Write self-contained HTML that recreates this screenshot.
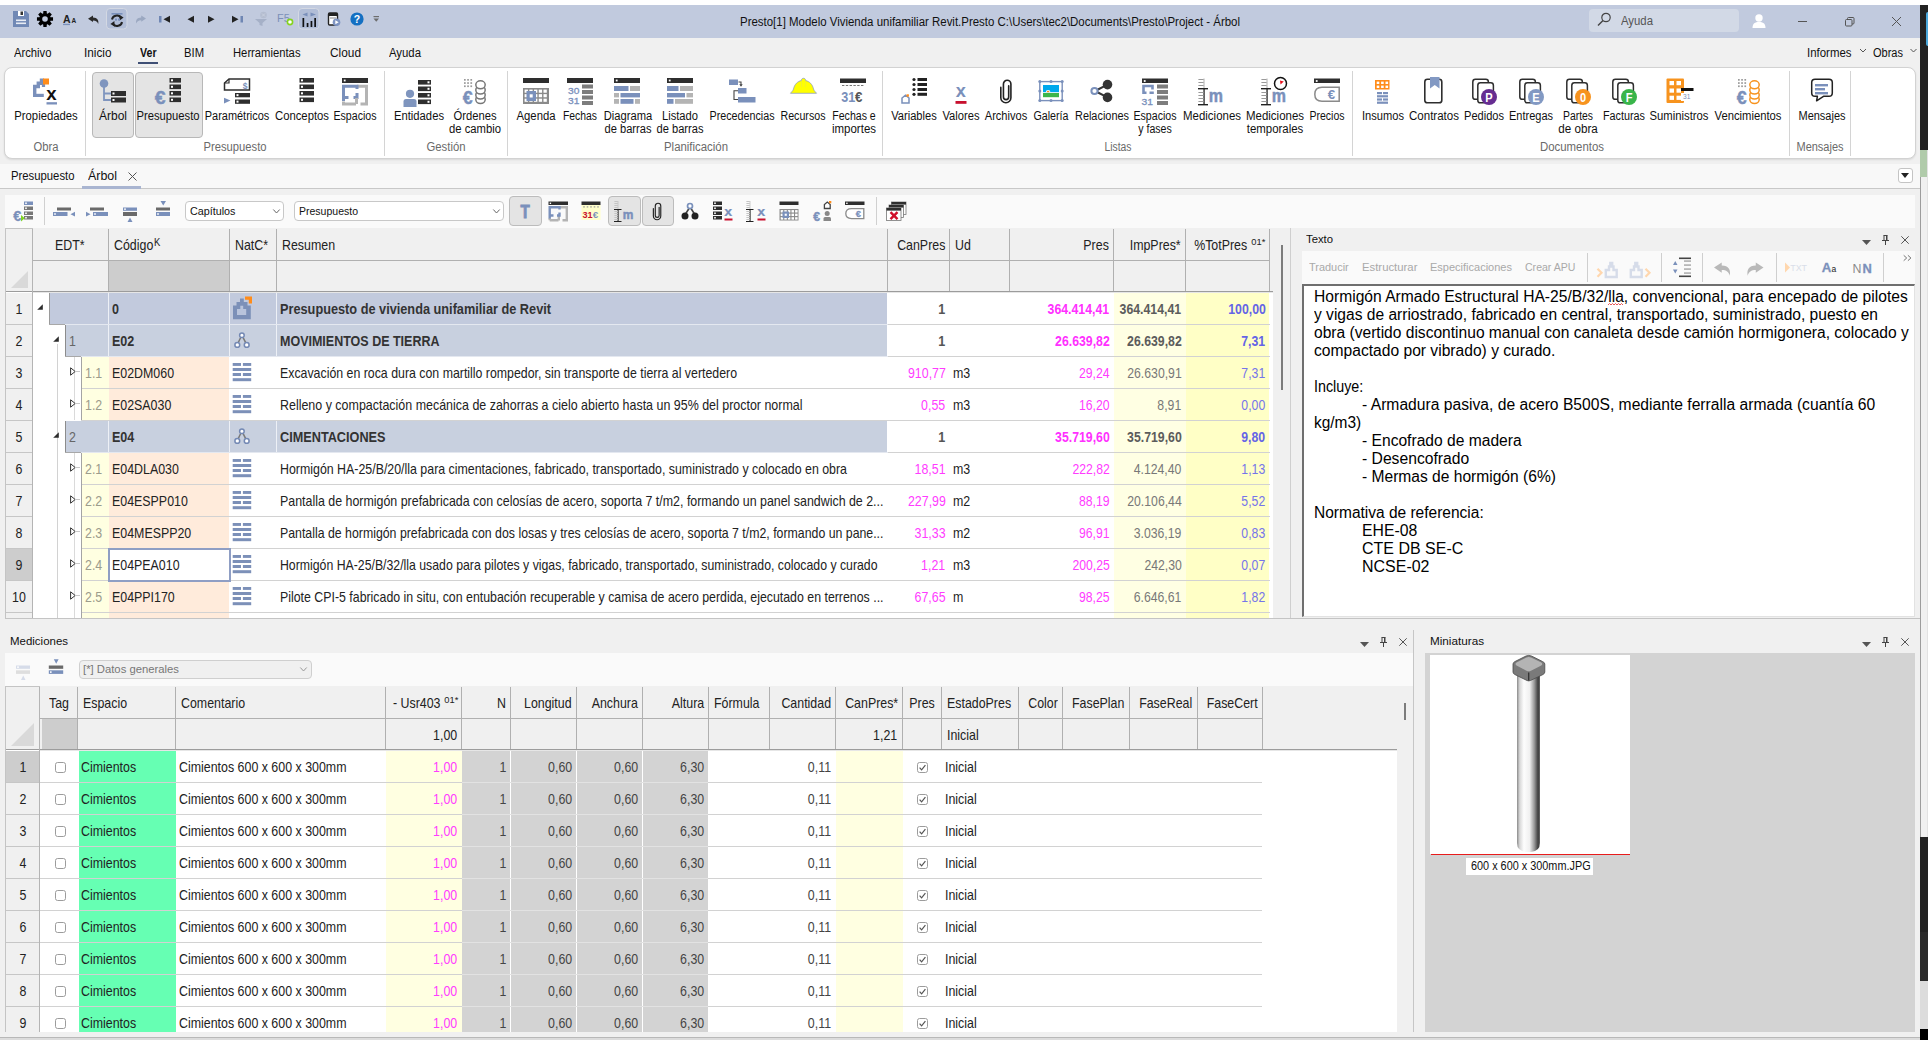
<!DOCTYPE html>
<html><head><meta charset="utf-8"><title>Presto</title><style>
html,body{margin:0;padding:0;}
body{width:1928px;height:1040px;overflow:hidden;background:#f0f0f0;position:relative;font-family:"Liberation Sans",sans-serif;}
body div,body svg,body span.t{position:absolute;}
span.t{white-space:nowrap;display:block;}
svg{overflow:visible;}
</style></head><body>
<div style="left:0px;top:0px;width:1928px;height:5px;background:#fff;"></div>
<div style="left:0px;top:5px;width:1920px;height:33px;background:#c1cade;"></div>
<span class="t" style="top:14px;font-size:12px;line-height:16px;color:#111;left:740px;transform-origin:0 50%;transform:scaleX(0.9542);">Presto[1] Modelo Vivienda unifamiliar Revit.Presto C:\Users\tec2\Documents\Presto\Project - Árbol</span>
<div style="left:1589px;top:9px;width:150px;height:23px;background:#d2d9e6;border-radius:4px;"></div>
<span class="t" style="top:13px;font-size:12px;line-height:16px;color:#555;left:1621px;transform-origin:0 50%;transform:scaleX(0.9465);">Ayuda</span>
<div style="left:0px;top:38px;width:1920px;height:30px;background:#f0f0f0;"></div>
<span class="t" style="top:45px;font-size:12px;line-height:16px;color:#111;left:14px;transform-origin:0 50%;transform:scaleX(0.9371);">Archivo</span>
<span class="t" style="top:45px;font-size:12px;line-height:16px;color:#111;left:84px;transform-origin:0 50%;transform:scaleX(0.9816);">Inicio</span>
<span class="t" style="top:45px;font-size:12px;line-height:16px;color:#111;font-weight:bold;left:140px;transform-origin:0 50%;transform:scaleX(0.8830);">Ver</span>
<span class="t" style="top:45px;font-size:12px;line-height:16px;color:#111;left:184px;transform-origin:0 50%;transform:scaleX(0.9374);">BIM</span>
<span class="t" style="top:45px;font-size:12px;line-height:16px;color:#111;left:233px;transform-origin:0 50%;transform:scaleX(0.9372);">Herramientas</span>
<span class="t" style="top:45px;font-size:12px;line-height:16px;color:#111;left:330px;transform-origin:0 50%;transform:scaleX(0.9887);">Cloud</span>
<span class="t" style="top:45px;font-size:12px;line-height:16px;color:#111;left:389px;transform-origin:0 50%;transform:scaleX(0.9465);">Ayuda</span>
<span class="t" style="top:45px;font-size:12px;line-height:16px;color:#111;left:1807px;transform-origin:0 50%;transform:scaleX(0.9532);">Informes</span>
<span class="t" style="top:45px;font-size:12px;line-height:16px;color:#111;left:1872.5px;transform-origin:0 50%;transform:scaleX(0.9180);">Obras</span>
<div style="left:138px;top:62px;width:20px;height:2px;background:#3f4f75;"></div>
<div style="left:4px;top:67px;width:1911.5px;height:92px;background:#fff;border:1px solid #d2d2d2;border-radius:8px;box-sizing:border-box;box-shadow:0 1px 2px rgba(0,0,0,0.10);"></div>
<div style="left:85px;top:70.5px;width:1px;height:85px;background:#d4d4d4;"></div>
<div style="left:384px;top:70.5px;width:1px;height:85px;background:#d4d4d4;"></div>
<div style="left:506.5px;top:70.5px;width:1px;height:85px;background:#d4d4d4;"></div>
<div style="left:882px;top:70.5px;width:1px;height:85px;background:#d4d4d4;"></div>
<div style="left:1352px;top:70.5px;width:1px;height:85px;background:#d4d4d4;"></div>
<div style="left:1789px;top:70.5px;width:1px;height:85px;background:#d4d4d4;"></div>
<div style="left:1850px;top:70.5px;width:1px;height:85px;background:#d4d4d4;"></div>
<div style="left:92px;top:72px;width:41.5px;height:65.5px;background:#e4e4e4;border:1px solid #b8b8b8;border-radius:4px;box-sizing:border-box;"></div>
<div style="left:134.5px;top:72px;width:68.5px;height:65.5px;background:#e4e4e4;border:1px solid #b8b8b8;border-radius:4px;box-sizing:border-box;"></div>
<span class="t" style="top:108px;font-size:12px;line-height:16px;color:#111;left:45.75px;transform:translateX(-50%) scaleX(0.9423);">Propiedades</span>
<span class="t" style="top:108px;font-size:12px;line-height:16px;color:#111;left:113px;transform:translateX(-50%) scaleX(0.9995);">Árbol</span>
<span class="t" style="top:108px;font-size:12px;line-height:16px;color:#111;left:167.75px;transform:translateX(-50%) scaleX(0.9350);">Presupuesto</span>
<span class="t" style="top:108px;font-size:12px;line-height:16px;color:#111;left:237.25px;transform:translateX(-50%) scaleX(0.9124);">Paramétricos</span>
<span class="t" style="top:108px;font-size:12px;line-height:16px;color:#111;left:301.5px;transform:translateX(-50%) scaleX(0.9413);">Conceptos</span>
<span class="t" style="top:108px;font-size:12px;line-height:16px;color:#111;left:355px;transform:translateX(-50%) scaleX(0.8831);">Espacios</span>
<span class="t" style="top:108px;font-size:12px;line-height:16px;color:#111;left:418.5px;transform:translateX(-50%) scaleX(0.9368);">Entidades</span>
<span class="t" style="top:108px;font-size:12px;line-height:16px;color:#111;left:474.5px;transform:translateX(-50%) scaleX(0.9342);">Órdenes</span>
<span class="t" style="top:121px;font-size:12px;line-height:16px;color:#111;left:474.5px;transform:translateX(-50%) scaleX(0.9392);">de cambio</span>
<span class="t" style="top:108px;font-size:12px;line-height:16px;color:#111;left:536px;transform:translateX(-50%) scaleX(0.9426);">Agenda</span>
<span class="t" style="top:108px;font-size:12px;line-height:16px;color:#111;left:579.5px;transform:translateX(-50%) scaleX(0.8640);">Fechas</span>
<span class="t" style="top:108px;font-size:12px;line-height:16px;color:#111;left:627.5px;transform:translateX(-50%) scaleX(0.9323);">Diagrama</span>
<span class="t" style="top:121px;font-size:12px;line-height:16px;color:#111;left:627.5px;transform:translateX(-50%) scaleX(0.9271);">de barras</span>
<span class="t" style="top:108px;font-size:12px;line-height:16px;color:#111;left:680px;transform:translateX(-50%) scaleX(0.9303);">Listado</span>
<span class="t" style="top:121px;font-size:12px;line-height:16px;color:#111;left:680px;transform:translateX(-50%) scaleX(0.9271);">de barras</span>
<span class="t" style="top:108px;font-size:12px;line-height:16px;color:#111;left:742px;transform:translateX(-50%) scaleX(0.8939);">Precedencias</span>
<span class="t" style="top:108px;font-size:12px;line-height:16px;color:#111;left:803px;transform:translateX(-50%) scaleX(0.8878);">Recursos</span>
<span class="t" style="top:108px;font-size:12px;line-height:16px;color:#111;left:853.5px;transform:translateX(-50%) scaleX(0.8813);">Fechas e</span>
<span class="t" style="top:121px;font-size:12px;line-height:16px;color:#111;left:853.5px;transform:translateX(-50%) scaleX(0.9562);">importes</span>
<span class="t" style="top:108px;font-size:12px;line-height:16px;color:#111;left:913.75px;transform:translateX(-50%) scaleX(0.9259);">Variables</span>
<span class="t" style="top:108px;font-size:12px;line-height:16px;color:#111;left:961.4px;transform:translateX(-50%) scaleX(0.9297);">Valores</span>
<span class="t" style="top:108px;font-size:12px;line-height:16px;color:#111;left:1006.25px;transform:translateX(-50%) scaleX(0.9236);">Archivos</span>
<span class="t" style="top:108px;font-size:12px;line-height:16px;color:#111;left:1051px;transform:translateX(-50%) scaleX(0.8894);">Galería</span>
<span class="t" style="top:108px;font-size:12px;line-height:16px;color:#111;left:1101.5px;transform:translateX(-50%) scaleX(0.9096);">Relaciones</span>
<span class="t" style="top:108px;font-size:12px;line-height:16px;color:#111;left:1155px;transform:translateX(-50%) scaleX(0.8831);">Espacios</span>
<span class="t" style="top:121px;font-size:12px;line-height:16px;color:#111;left:1155px;transform:translateX(-50%) scaleX(0.8812);">y fases</span>
<span class="t" style="top:108px;font-size:12px;line-height:16px;color:#111;left:1211.5px;transform:translateX(-50%) scaleX(0.9555);">Mediciones</span>
<span class="t" style="top:108px;font-size:12px;line-height:16px;color:#111;left:1274.5px;transform:translateX(-50%) scaleX(0.9555);">Mediciones</span>
<span class="t" style="top:121px;font-size:12px;line-height:16px;color:#111;left:1274.5px;transform:translateX(-50%) scaleX(0.9518);">temporales</span>
<span class="t" style="top:108px;font-size:12px;line-height:16px;color:#111;left:1327px;transform:translateX(-50%) scaleX(0.8747);">Precios</span>
<span class="t" style="top:108px;font-size:12px;line-height:16px;color:#111;left:1382.5px;transform:translateX(-50%) scaleX(0.9261);">Insumos</span>
<span class="t" style="top:108px;font-size:12px;line-height:16px;color:#111;left:1433.6px;transform:translateX(-50%) scaleX(0.9610);">Contratos</span>
<span class="t" style="top:108px;font-size:12px;line-height:16px;color:#111;left:1483.5px;transform:translateX(-50%) scaleX(0.9224);">Pedidos</span>
<span class="t" style="top:108px;font-size:12px;line-height:16px;color:#111;left:1530.5px;transform:translateX(-50%) scaleX(0.9161);">Entregas</span>
<span class="t" style="top:108px;font-size:12px;line-height:16px;color:#111;left:1577.5px;transform:translateX(-50%) scaleX(0.8650);">Partes</span>
<span class="t" style="top:121px;font-size:12px;line-height:16px;color:#111;left:1577.5px;transform:translateX(-50%) scaleX(0.9705);">de obra</span>
<span class="t" style="top:108px;font-size:12px;line-height:16px;color:#111;left:1623.5px;transform:translateX(-50%) scaleX(0.8997);">Facturas</span>
<span class="t" style="top:108px;font-size:12px;line-height:16px;color:#111;left:1679px;transform:translateX(-50%) scaleX(0.9412);">Suministros</span>
<span class="t" style="top:108px;font-size:12px;line-height:16px;color:#111;left:1748px;transform:translateX(-50%) scaleX(0.9387);">Vencimientos</span>
<span class="t" style="top:108px;font-size:12px;line-height:16px;color:#111;left:1822px;transform:translateX(-50%) scaleX(0.9151);">Mensajes</span>
<span class="t" style="top:139px;font-size:12px;line-height:16px;color:#6a6a6a;left:46px;transform:translateX(-50%) scaleX(0.9371);">Obra</span>
<span class="t" style="top:139px;font-size:12px;line-height:16px;color:#6a6a6a;left:235px;transform:translateX(-50%) scaleX(0.9350);">Presupuesto</span>
<span class="t" style="top:139px;font-size:12px;line-height:16px;color:#6a6a6a;left:446px;transform:translateX(-50%) scaleX(0.9430);">Gestión</span>
<span class="t" style="top:139px;font-size:12px;line-height:16px;color:#6a6a6a;left:695.5px;transform:translateX(-50%) scaleX(0.9499);">Planificación</span>
<span class="t" style="top:139px;font-size:12px;line-height:16px;color:#6a6a6a;left:1118px;transform:translateX(-50%) scaleX(0.8613);">Listas</span>
<span class="t" style="top:139px;font-size:12px;line-height:16px;color:#6a6a6a;left:1571.5px;transform:translateX(-50%) scaleX(0.9500);">Documentos</span>
<span class="t" style="top:139px;font-size:12px;line-height:16px;color:#6a6a6a;left:1820px;transform:translateX(-50%) scaleX(0.9151);">Mensajes</span>
<div style="left:0px;top:164px;width:1920px;height:24px;background:#f8f8f8;"></div>
<div style="left:0px;top:188px;width:1920px;height:1px;background:#c8c8c8;"></div>
<span class="t" style="top:168px;font-size:12px;line-height:16px;color:#111;left:11px;transform-origin:0 50%;transform:scaleX(0.9424);">Presupuesto</span>
<span class="t" style="top:168px;font-size:12px;line-height:16px;color:#111;left:88px;transform-origin:0 50%;transform:scaleX(1.0351);">Árbol</span>
<div style="left:82px;top:186px;width:59px;height:2.5px;background:#a9b5d1;"></div>
<svg style="left:128px;top:172px" width="9" height="9" viewBox="0 0 9 9"><path d="M0.5 0.5L8.5 8.5M8.5 0.5L0.5 8.5" stroke="#555" stroke-width="1" fill="none"/></svg>
<div style="left:1897.5px;top:167.5px;width:15px;height:15px;background:#fff;border:1px solid #c4c4c4;border-radius:3px;box-sizing:border-box;"></div>
<svg style="left:1901px;top:173px" width="8" height="5" viewBox="0 0 8 5"><path d="M0 0H8L4 5Z" fill="#222"/></svg>
<div style="left:5px;top:195px;width:1910px;height:33px;background:#fafafa;"></div>
<div style="left:44px;top:197px;width:1px;height:28px;background:#d0d0d0;"></div>
<div style="left:876px;top:197px;width:1px;height:28px;background:#d0d0d0;"></div>
<div style="left:185px;top:201px;width:99px;height:20px;background:#fff;border:1px solid #c8c8c8;border-radius:4px;box-sizing:border-box;"></div>
<span class="t" style="top:204px;font-size:11px;line-height:14px;color:#111;left:189.5px;transform-origin:0 50%;transform:scaleX(0.9791);">Capítulos</span>
<svg style="left:273px;top:209px" width="7" height="5" viewBox="0 0 7 5"><path d="M0.3 0.5L3.5 4L6.7 0.5" stroke="#666" stroke-width="1" fill="none"/></svg>
<div style="left:294px;top:201px;width:209.5px;height:20px;background:#fff;border:1px solid #c8c8c8;border-radius:4px;box-sizing:border-box;"></div>
<span class="t" style="top:204px;font-size:11px;line-height:14px;color:#111;left:298.5px;transform-origin:0 50%;transform:scaleX(0.9552);">Presupuesto</span>
<svg style="left:492.5px;top:209px" width="7" height="5" viewBox="0 0 7 5"><path d="M0.3 0.5L3.5 4L6.7 0.5" stroke="#666" stroke-width="1" fill="none"/></svg>
<div style="left:509px;top:196px;width:33px;height:30px;background:#e4e4e4;border:1px solid #bcbcbc;border-radius:4px;box-sizing:border-box;"></div>
<div style="left:608px;top:196px;width:32.5px;height:30px;background:#e4e4e4;border:1px solid #bcbcbc;border-radius:4px;box-sizing:border-box;"></div>
<div style="left:641.5px;top:196px;width:32px;height:30px;background:#e4e4e4;border:1px solid #bcbcbc;border-radius:4px;box-sizing:border-box;"></div>
<div style="left:1920px;top:5px;width:8px;height:145px;background:#222;"></div>
<div style="left:1925.8px;top:11.5px;width:2.2px;height:34.5px;background:#4aa8dc;border-radius:2px 0 0 2px;"></div>
<div style="left:1920px;top:150px;width:8px;height:27px;background:#b0cbaa;"></div>
<div style="left:1920px;top:177px;width:8px;height:660px;background:#f0f0f0;"></div>
<div style="left:1920px;top:177px;width:1px;height:660px;background:#9c9c9c;"></div>
<div style="left:1927px;top:150px;width:1px;height:687px;background:#e2e2e2;"></div>
<div style="left:1920px;top:837px;width:8px;height:95px;background:#222;"></div>
<div style="left:1920px;top:932px;width:8px;height:49px;background:#2a2a2a;"></div>
<div style="left:1920px;top:981px;width:8px;height:48px;background:#dcdcdc;"></div>
<div style="left:1920px;top:1029px;width:8px;height:11px;background:#000;"></div>
<div style="left:0px;top:1032px;width:1920px;height:5px;background:#f0f0f0;"></div>
<div style="left:0px;top:1037px;width:1920px;height:1px;background:#b8b8b8;"></div>
<div style="left:0px;top:1038px;width:1920px;height:2px;background:#dcdcdc;"></div>
<div style="left:5px;top:228px;width:1268px;height:390px;background:#fff;"></div>
<div style="left:5px;top:228px;width:1268px;height:64px;background:#f0f0f0;"></div>
<div style="left:33px;top:260px;width:1237px;height:1px;background:#b0b0b0;"></div>
<div style="left:5px;top:291px;width:1268px;height:1px;background:#9c9c9c;"></div>
<div style="left:33px;top:292px;width:1240px;height:1px;background:#e6e6e6;"></div>
<div style="left:108px;top:229px;width:1px;height:62px;background:#b0b0b0;"></div>
<div style="left:229px;top:229px;width:1px;height:62px;background:#b0b0b0;"></div>
<div style="left:276px;top:229px;width:1px;height:62px;background:#b0b0b0;"></div>
<div style="left:887px;top:229px;width:1px;height:62px;background:#b0b0b0;"></div>
<div style="left:948.5px;top:229px;width:1px;height:62px;background:#b0b0b0;"></div>
<div style="left:1009px;top:229px;width:1px;height:62px;background:#b0b0b0;"></div>
<div style="left:1113px;top:229px;width:1px;height:62px;background:#b0b0b0;"></div>
<div style="left:1185px;top:229px;width:1px;height:62px;background:#b0b0b0;"></div>
<div style="left:1269px;top:229px;width:1px;height:62px;background:#b0b0b0;"></div>
<div style="left:32px;top:228px;width:1px;height:390px;background:#b4b4b4;"></div>
<div style="left:5px;top:228px;width:1px;height:390px;background:#c4c4c4;"></div>
<div style="left:5px;top:228px;width:28px;height:1px;background:#c4c4c4;"></div>
<div style="left:109px;top:261px;width:120px;height:30px;background:#cdcdcd;"></div>
<svg style="left:11px;top:271px" width="17" height="17" viewBox="0 0 17 17"><path d="M17 0V17H0Z" fill="#d9d9d9"/></svg>
<span class="t" style="top:235px;font-size:15px;line-height:20px;color:#222;left:55px;transform-origin:0 50%;transform:scaleX(0.8265);">EDT*</span>
<span class="t" style="top:235px;font-size:15px;line-height:20px;color:#222;left:114px;transform-origin:0 50%;transform:scaleX(0.8265);">Código</span>
<span class="t" style="top:235px;font-size:10.5px;line-height:14px;color:#222;left:153.5px;transform-origin:0 50%;transform:scaleX(0.9000);">K</span>
<span class="t" style="top:235px;font-size:15px;line-height:20px;color:#222;left:235px;transform-origin:0 50%;transform:scaleX(0.8265);">NatC*</span>
<span class="t" style="top:235px;font-size:15px;line-height:20px;color:#222;left:282px;transform-origin:0 50%;transform:scaleX(0.8265);">Resumen</span>
<span class="t" style="top:235px;font-size:15px;line-height:20px;color:#222;right:983px;transform-origin:100% 50%;transform:scaleX(0.8265);">CanPres</span>
<span class="t" style="top:235px;font-size:15px;line-height:20px;color:#222;left:955px;transform-origin:0 50%;transform:scaleX(0.8265);">Ud</span>
<span class="t" style="top:235px;font-size:15px;line-height:20px;color:#222;right:819px;transform-origin:100% 50%;transform:scaleX(0.8265);">Pres</span>
<span class="t" style="top:235px;font-size:15px;line-height:20px;color:#222;right:747px;transform-origin:100% 50%;transform:scaleX(0.8265);">ImpPres*</span>
<span class="t" style="top:235px;font-size:15px;line-height:20px;color:#222;right:681px;transform-origin:100% 50%;transform:scaleX(0.8265);">%TotPres</span>
<span class="t" style="top:236px;font-size:9.5px;line-height:12px;color:#222;right:662.7px;transform-origin:100% 50%;transform:scaleX(0.9815);">01*</span>
<div style="left:1273.5px;top:228px;width:16.5px;height:390px;background:#f0f0f0;"></div>
<div style="left:1281px;top:245px;width:2px;height:145px;background:#7c7c7c;"></div>
<div style="left:1290px;top:228px;width:1px;height:390px;background:#cfcfcf;"></div>
<div style="left:5px;top:618px;width:1915px;height:1px;background:#c4c4c4;"></div>
<div style="left:1114px;top:293px;width:71.5px;height:31px;background:#ffffe3;"></div>
<div style="left:1186px;top:293px;width:82.5px;height:31px;background:#ffffc6;"></div>
<div style="left:50px;top:293px;width:837px;height:31px;background:#c2cadd;"></div>
<div style="left:108px;top:293px;width:1px;height:31px;background:#edf0f6;"></div>
<div style="left:229px;top:293px;width:1px;height:31px;background:#edf0f6;"></div>
<div style="left:276px;top:293px;width:1px;height:31px;background:#edf0f6;"></div>
<div style="left:6px;top:293px;width:26px;height:31px;background:#f0f0f0;"></div>
<span class="t" style="top:299px;font-size:15px;line-height:20px;color:#222;left:18.7px;transform:translateX(-50%) scaleX(0.8265);">1</span>
<span class="t" style="top:299px;font-size:15px;line-height:20px;color:#333;font-weight:bold;left:112px;transform-origin:0 50%;transform:scaleX(0.8360);">0</span>
<svg style="left:233px;top:298px" width="18" height="22" viewBox="0 0 18 22"><path d="M0 21.3V7.5H3.5V4H7V0.5H10.8V4H14.5V7.5H17.8V21.3Z" fill="#7c90b8"/><path d="M4 17V11H7.3V7.8H10.2V11H13.2V17Z" fill="#b9c4dc"/><path d="M12 -1.5H19V5.5H15.8V1.7H12Z" fill="#ff8c1a"/></svg>
<span class="t" style="top:299px;font-size:15px;line-height:20px;color:#333;font-weight:bold;left:280px;transform-origin:0 50%;transform:scaleX(0.8488);">Presupuesto de vivienda unifamiliar de Revit</span>
<span class="t" style="top:299px;font-size:15px;line-height:20px;color:#555;font-weight:bold;right:982.5px;transform-origin:100% 50%;transform:scaleX(0.8360);">1</span>
<span class="t" style="top:299px;font-size:15px;line-height:20px;color:#ff30ff;font-weight:bold;right:818.5px;transform-origin:100% 50%;transform:scaleX(0.8195);">364.414,41</span>
<span class="t" style="top:299px;font-size:15px;line-height:20px;color:#5c5c5c;font-weight:bold;right:746.5px;transform-origin:100% 50%;transform:scaleX(0.8195);">364.414,41</span>
<span class="t" style="top:299px;font-size:15px;line-height:20px;color:#6464e6;font-weight:bold;right:662.5px;transform-origin:100% 50%;transform:scaleX(0.8195);">100,00</span>
<div style="left:1114px;top:325px;width:71.5px;height:31px;background:#ffffe3;"></div>
<div style="left:1186px;top:325px;width:82.5px;height:31px;background:#ffffc6;"></div>
<div style="left:66px;top:325px;width:821px;height:31px;background:#c8d0df;"></div>
<div style="left:108px;top:325px;width:1px;height:31px;background:#edf0f6;"></div>
<div style="left:229px;top:325px;width:1px;height:31px;background:#edf0f6;"></div>
<div style="left:276px;top:325px;width:1px;height:31px;background:#edf0f6;"></div>
<div style="left:6px;top:325px;width:26px;height:31px;background:#f0f0f0;"></div>
<span class="t" style="top:331px;font-size:15px;line-height:20px;color:#222;left:18.7px;transform:translateX(-50%) scaleX(0.8265);">2</span>
<span class="t" style="top:331px;font-size:15px;line-height:20px;color:#666;left:68.7px;transform-origin:0 50%;transform:scaleX(0.8265);">1</span>
<span class="t" style="top:331px;font-size:15px;line-height:20px;color:#333;font-weight:bold;left:112px;transform-origin:0 50%;transform:scaleX(0.8360);">E02</span>
<svg style="left:233px;top:335px" width="18" height="22" viewBox="0 0 18 22"><path d="M7.8 2.3L4.3 9.6M10 2.3L13.7 9.6" stroke="#7a7a7a" stroke-width="1.5"/><g fill="#fff" stroke="#7489b4" stroke-width="1.5"><circle cx="8.9" cy="0.3" r="2.3"/><circle cx="4.3" cy="9.9" r="2.4"/><circle cx="13.7" cy="9.9" r="2.4"/></g></svg>
<span class="t" style="top:331px;font-size:15px;line-height:20px;color:#333;font-weight:bold;left:280px;transform-origin:0 50%;transform:scaleX(0.8333);">MOVIMIENTOS DE TIERRA</span>
<span class="t" style="top:331px;font-size:15px;line-height:20px;color:#555;font-weight:bold;right:982.5px;transform-origin:100% 50%;transform:scaleX(0.8360);">1</span>
<span class="t" style="top:331px;font-size:15px;line-height:20px;color:#ff30ff;font-weight:bold;right:818.5px;transform-origin:100% 50%;transform:scaleX(0.8195);">26.639,82</span>
<span class="t" style="top:331px;font-size:15px;line-height:20px;color:#5c5c5c;font-weight:bold;right:746.5px;transform-origin:100% 50%;transform:scaleX(0.8195);">26.639,82</span>
<span class="t" style="top:331px;font-size:15px;line-height:20px;color:#6464e6;font-weight:bold;right:662.5px;transform-origin:100% 50%;transform:scaleX(0.8195);">7,31</span>
<div style="left:1114px;top:357px;width:71.5px;height:31px;background:#ffffe3;"></div>
<div style="left:1186px;top:357px;width:82.5px;height:31px;background:#ffffc6;"></div>
<div style="left:81.5px;top:357px;width:27px;height:31px;background:#ffffe1;"></div>
<div style="left:108.5px;top:357px;width:120.5px;height:31px;background:#ffebdb;"></div>
<div style="left:6px;top:357px;width:26px;height:31px;background:#f0f0f0;"></div>
<span class="t" style="top:363px;font-size:15px;line-height:20px;color:#222;left:18.7px;transform:translateX(-50%) scaleX(0.8265);">3</span>
<span class="t" style="top:363px;font-size:15px;line-height:20px;color:#9c9c8c;left:84.7px;transform-origin:0 50%;transform:scaleX(0.8265);">1.1</span>
<span class="t" style="top:363px;font-size:15px;line-height:20px;color:#222;left:112px;transform-origin:0 50%;transform:scaleX(0.8265);">E02DM060</span>
<svg style="left:233px;top:363px" width="18" height="22" viewBox="0 0 18 22"><g fill="#7c90b8"><rect x="-0.3" y="0" width="8.3" height="2.9"/><rect x="9.9" y="0" width="8.3" height="2.9"/><rect x="-0.3" y="5" width="18.5" height="3"/><rect x="-0.3" y="10" width="8.3" height="3"/><rect x="9.9" y="10" width="8.3" height="3"/><rect x="-0.3" y="15.2" width="18.5" height="3"/></g></svg>
<span class="t" style="top:363px;font-size:15px;line-height:20px;color:#222;left:280px;transform-origin:0 50%;transform:scaleX(0.8230);">Excavación en roca dura con martillo rompedor, sin transporte de tierra al vertedero</span>
<span class="t" style="top:363px;font-size:15px;line-height:20px;color:#ff3cff;right:982.5px;transform-origin:100% 50%;transform:scaleX(0.8265);">910,77</span>
<span class="t" style="top:363px;font-size:15px;line-height:20px;color:#222;left:953px;transform-origin:0 50%;transform:scaleX(0.8265);">m3</span>
<span class="t" style="top:363px;font-size:15px;line-height:20px;color:#ff3cff;right:818.5px;transform-origin:100% 50%;transform:scaleX(0.8165);">29,24</span>
<span class="t" style="top:363px;font-size:15px;line-height:20px;color:#787878;right:746.5px;transform-origin:100% 50%;transform:scaleX(0.8165);">26.630,91</span>
<span class="t" style="top:363px;font-size:15px;line-height:20px;color:#7474ea;right:662.5px;transform-origin:100% 50%;transform:scaleX(0.8165);">7,31</span>
<div style="left:1114px;top:389px;width:71.5px;height:31px;background:#ffffe3;"></div>
<div style="left:1186px;top:389px;width:82.5px;height:31px;background:#ffffc6;"></div>
<div style="left:81.5px;top:389px;width:27px;height:31px;background:#ffffe1;"></div>
<div style="left:108.5px;top:389px;width:120.5px;height:31px;background:#ffebdb;"></div>
<div style="left:6px;top:389px;width:26px;height:31px;background:#f0f0f0;"></div>
<span class="t" style="top:395px;font-size:15px;line-height:20px;color:#222;left:18.7px;transform:translateX(-50%) scaleX(0.8265);">4</span>
<span class="t" style="top:395px;font-size:15px;line-height:20px;color:#9c9c8c;left:84.7px;transform-origin:0 50%;transform:scaleX(0.8265);">1.2</span>
<span class="t" style="top:395px;font-size:15px;line-height:20px;color:#222;left:112px;transform-origin:0 50%;transform:scaleX(0.8265);">E02SA030</span>
<svg style="left:233px;top:395px" width="18" height="22" viewBox="0 0 18 22"><g fill="#7c90b8"><rect x="-0.3" y="0" width="8.3" height="2.9"/><rect x="9.9" y="0" width="8.3" height="2.9"/><rect x="-0.3" y="5" width="18.5" height="3"/><rect x="-0.3" y="10" width="8.3" height="3"/><rect x="9.9" y="10" width="8.3" height="3"/><rect x="-0.3" y="15.2" width="18.5" height="3"/></g></svg>
<span class="t" style="top:395px;font-size:15px;line-height:20px;color:#222;left:280px;transform-origin:0 50%;transform:scaleX(0.8300);">Relleno y compactación mecánica de zahorras a cielo abierto hasta un 95% del proctor normal</span>
<span class="t" style="top:395px;font-size:15px;line-height:20px;color:#ff3cff;right:982.5px;transform-origin:100% 50%;transform:scaleX(0.8265);">0,55</span>
<span class="t" style="top:395px;font-size:15px;line-height:20px;color:#222;left:953px;transform-origin:0 50%;transform:scaleX(0.8265);">m3</span>
<span class="t" style="top:395px;font-size:15px;line-height:20px;color:#ff3cff;right:818.5px;transform-origin:100% 50%;transform:scaleX(0.8165);">16,20</span>
<span class="t" style="top:395px;font-size:15px;line-height:20px;color:#787878;right:746.5px;transform-origin:100% 50%;transform:scaleX(0.8165);">8,91</span>
<span class="t" style="top:395px;font-size:15px;line-height:20px;color:#7474ea;right:662.5px;transform-origin:100% 50%;transform:scaleX(0.8165);">0,00</span>
<div style="left:1114px;top:421px;width:71.5px;height:31px;background:#ffffe3;"></div>
<div style="left:1186px;top:421px;width:82.5px;height:31px;background:#ffffc6;"></div>
<div style="left:66px;top:421px;width:821px;height:31px;background:#c8d0df;"></div>
<div style="left:108px;top:421px;width:1px;height:31px;background:#edf0f6;"></div>
<div style="left:229px;top:421px;width:1px;height:31px;background:#edf0f6;"></div>
<div style="left:276px;top:421px;width:1px;height:31px;background:#edf0f6;"></div>
<div style="left:6px;top:421px;width:26px;height:31px;background:#f0f0f0;"></div>
<span class="t" style="top:427px;font-size:15px;line-height:20px;color:#222;left:18.7px;transform:translateX(-50%) scaleX(0.8265);">5</span>
<span class="t" style="top:427px;font-size:15px;line-height:20px;color:#666;left:68.7px;transform-origin:0 50%;transform:scaleX(0.8265);">2</span>
<span class="t" style="top:427px;font-size:15px;line-height:20px;color:#333;font-weight:bold;left:112px;transform-origin:0 50%;transform:scaleX(0.8360);">E04</span>
<svg style="left:233px;top:431px" width="18" height="22" viewBox="0 0 18 22"><path d="M7.8 2.3L4.3 9.6M10 2.3L13.7 9.6" stroke="#7a7a7a" stroke-width="1.5"/><g fill="#fff" stroke="#7489b4" stroke-width="1.5"><circle cx="8.9" cy="0.3" r="2.3"/><circle cx="4.3" cy="9.9" r="2.4"/><circle cx="13.7" cy="9.9" r="2.4"/></g></svg>
<span class="t" style="top:427px;font-size:15px;line-height:20px;color:#333;font-weight:bold;left:280px;transform-origin:0 50%;transform:scaleX(0.8458);">CIMENTACIONES</span>
<span class="t" style="top:427px;font-size:15px;line-height:20px;color:#555;font-weight:bold;right:982.5px;transform-origin:100% 50%;transform:scaleX(0.8360);">1</span>
<span class="t" style="top:427px;font-size:15px;line-height:20px;color:#ff30ff;font-weight:bold;right:818.5px;transform-origin:100% 50%;transform:scaleX(0.8195);">35.719,60</span>
<span class="t" style="top:427px;font-size:15px;line-height:20px;color:#5c5c5c;font-weight:bold;right:746.5px;transform-origin:100% 50%;transform:scaleX(0.8195);">35.719,60</span>
<span class="t" style="top:427px;font-size:15px;line-height:20px;color:#6464e6;font-weight:bold;right:662.5px;transform-origin:100% 50%;transform:scaleX(0.8195);">9,80</span>
<div style="left:1114px;top:453px;width:71.5px;height:31px;background:#ffffe3;"></div>
<div style="left:1186px;top:453px;width:82.5px;height:31px;background:#ffffc6;"></div>
<div style="left:81.5px;top:453px;width:27px;height:31px;background:#ffffe1;"></div>
<div style="left:108.5px;top:453px;width:120.5px;height:31px;background:#ffebdb;"></div>
<div style="left:6px;top:453px;width:26px;height:31px;background:#f0f0f0;"></div>
<span class="t" style="top:459px;font-size:15px;line-height:20px;color:#222;left:18.7px;transform:translateX(-50%) scaleX(0.8265);">6</span>
<span class="t" style="top:459px;font-size:15px;line-height:20px;color:#9c9c8c;left:84.7px;transform-origin:0 50%;transform:scaleX(0.8265);">2.1</span>
<span class="t" style="top:459px;font-size:15px;line-height:20px;color:#222;left:112px;transform-origin:0 50%;transform:scaleX(0.8265);">E04DLA030</span>
<svg style="left:233px;top:459px" width="18" height="22" viewBox="0 0 18 22"><g fill="#7c90b8"><rect x="-0.3" y="0" width="8.3" height="2.9"/><rect x="9.9" y="0" width="8.3" height="2.9"/><rect x="-0.3" y="5" width="18.5" height="3"/><rect x="-0.3" y="10" width="8.3" height="3"/><rect x="9.9" y="10" width="8.3" height="3"/><rect x="-0.3" y="15.2" width="18.5" height="3"/></g></svg>
<span class="t" style="top:459px;font-size:15px;line-height:20px;color:#222;left:280px;transform-origin:0 50%;transform:scaleX(0.8253);">Hormigón HA-25/B/20/lla para cimentaciones, fabricado, transportado, suministrado y colocado en obra</span>
<span class="t" style="top:459px;font-size:15px;line-height:20px;color:#ff3cff;right:982.5px;transform-origin:100% 50%;transform:scaleX(0.8265);">18,51</span>
<span class="t" style="top:459px;font-size:15px;line-height:20px;color:#222;left:953px;transform-origin:0 50%;transform:scaleX(0.8265);">m3</span>
<span class="t" style="top:459px;font-size:15px;line-height:20px;color:#ff3cff;right:818.5px;transform-origin:100% 50%;transform:scaleX(0.8165);">222,82</span>
<span class="t" style="top:459px;font-size:15px;line-height:20px;color:#787878;right:746.5px;transform-origin:100% 50%;transform:scaleX(0.8165);">4.124,40</span>
<span class="t" style="top:459px;font-size:15px;line-height:20px;color:#7474ea;right:662.5px;transform-origin:100% 50%;transform:scaleX(0.8165);">1,13</span>
<div style="left:1114px;top:485px;width:71.5px;height:31px;background:#ffffe3;"></div>
<div style="left:1186px;top:485px;width:82.5px;height:31px;background:#ffffc6;"></div>
<div style="left:81.5px;top:485px;width:27px;height:31px;background:#ffffe1;"></div>
<div style="left:108.5px;top:485px;width:120.5px;height:31px;background:#ffebdb;"></div>
<div style="left:6px;top:485px;width:26px;height:31px;background:#f0f0f0;"></div>
<span class="t" style="top:491px;font-size:15px;line-height:20px;color:#222;left:18.7px;transform:translateX(-50%) scaleX(0.8265);">7</span>
<span class="t" style="top:491px;font-size:15px;line-height:20px;color:#9c9c8c;left:84.7px;transform-origin:0 50%;transform:scaleX(0.8265);">2.2</span>
<span class="t" style="top:491px;font-size:15px;line-height:20px;color:#222;left:112px;transform-origin:0 50%;transform:scaleX(0.8265);">E04ESPP010</span>
<svg style="left:233px;top:491px" width="18" height="22" viewBox="0 0 18 22"><g fill="#7c90b8"><rect x="-0.3" y="0" width="8.3" height="2.9"/><rect x="9.9" y="0" width="8.3" height="2.9"/><rect x="-0.3" y="5" width="18.5" height="3"/><rect x="-0.3" y="10" width="8.3" height="3"/><rect x="9.9" y="10" width="8.3" height="3"/><rect x="-0.3" y="15.2" width="18.5" height="3"/></g></svg>
<span class="t" style="top:491px;font-size:15px;line-height:20px;color:#222;left:280px;transform-origin:0 50%;transform:scaleX(0.8271);">Pantalla de hormigón prefabricada con celosías de acero, soporta 7 t/m2, formando un panel sandwich de 2...</span>
<span class="t" style="top:491px;font-size:15px;line-height:20px;color:#ff3cff;right:982.5px;transform-origin:100% 50%;transform:scaleX(0.8265);">227,99</span>
<span class="t" style="top:491px;font-size:15px;line-height:20px;color:#222;left:953px;transform-origin:0 50%;transform:scaleX(0.8265);">m2</span>
<span class="t" style="top:491px;font-size:15px;line-height:20px;color:#ff3cff;right:818.5px;transform-origin:100% 50%;transform:scaleX(0.8165);">88,19</span>
<span class="t" style="top:491px;font-size:15px;line-height:20px;color:#787878;right:746.5px;transform-origin:100% 50%;transform:scaleX(0.8165);">20.106,44</span>
<span class="t" style="top:491px;font-size:15px;line-height:20px;color:#7474ea;right:662.5px;transform-origin:100% 50%;transform:scaleX(0.8165);">5,52</span>
<div style="left:1114px;top:517px;width:71.5px;height:31px;background:#ffffe3;"></div>
<div style="left:1186px;top:517px;width:82.5px;height:31px;background:#ffffc6;"></div>
<div style="left:81.5px;top:517px;width:27px;height:31px;background:#ffffe1;"></div>
<div style="left:108.5px;top:517px;width:120.5px;height:31px;background:#ffebdb;"></div>
<div style="left:6px;top:517px;width:26px;height:31px;background:#f0f0f0;"></div>
<span class="t" style="top:523px;font-size:15px;line-height:20px;color:#222;left:18.7px;transform:translateX(-50%) scaleX(0.8265);">8</span>
<span class="t" style="top:523px;font-size:15px;line-height:20px;color:#9c9c8c;left:84.7px;transform-origin:0 50%;transform:scaleX(0.8265);">2.3</span>
<span class="t" style="top:523px;font-size:15px;line-height:20px;color:#222;left:112px;transform-origin:0 50%;transform:scaleX(0.8265);">E04MESPP20</span>
<svg style="left:233px;top:523px" width="18" height="22" viewBox="0 0 18 22"><g fill="#7c90b8"><rect x="-0.3" y="0" width="8.3" height="2.9"/><rect x="9.9" y="0" width="8.3" height="2.9"/><rect x="-0.3" y="5" width="18.5" height="3"/><rect x="-0.3" y="10" width="8.3" height="3"/><rect x="9.9" y="10" width="8.3" height="3"/><rect x="-0.3" y="15.2" width="18.5" height="3"/></g></svg>
<span class="t" style="top:523px;font-size:15px;line-height:20px;color:#222;left:280px;transform-origin:0 50%;transform:scaleX(0.8215);">Pantalla de hormigón prefabricada con dos losas y tres celosías de acero, soporta 7 t/m2, formando un pane...</span>
<span class="t" style="top:523px;font-size:15px;line-height:20px;color:#ff3cff;right:982.5px;transform-origin:100% 50%;transform:scaleX(0.8265);">31,33</span>
<span class="t" style="top:523px;font-size:15px;line-height:20px;color:#222;left:953px;transform-origin:0 50%;transform:scaleX(0.8265);">m2</span>
<span class="t" style="top:523px;font-size:15px;line-height:20px;color:#ff3cff;right:818.5px;transform-origin:100% 50%;transform:scaleX(0.8165);">96,91</span>
<span class="t" style="top:523px;font-size:15px;line-height:20px;color:#787878;right:746.5px;transform-origin:100% 50%;transform:scaleX(0.8165);">3.036,19</span>
<span class="t" style="top:523px;font-size:15px;line-height:20px;color:#7474ea;right:662.5px;transform-origin:100% 50%;transform:scaleX(0.8165);">0,83</span>
<div style="left:1114px;top:549px;width:71.5px;height:31px;background:#ffffe3;"></div>
<div style="left:1186px;top:549px;width:82.5px;height:31px;background:#ffffc6;"></div>
<div style="left:81.5px;top:549px;width:27px;height:31px;background:#ffffe1;"></div>
<div style="left:108.5px;top:549px;width:120.5px;height:31px;background:#ffebdb;"></div>
<div style="left:6px;top:549px;width:26px;height:31px;background:#cdcdcd;"></div>
<span class="t" style="top:555px;font-size:15px;line-height:20px;color:#222;left:18.7px;transform:translateX(-50%) scaleX(0.8265);">9</span>
<span class="t" style="top:555px;font-size:15px;line-height:20px;color:#9c9c8c;left:84.7px;transform-origin:0 50%;transform:scaleX(0.8265);">2.4</span>
<span class="t" style="top:555px;font-size:15px;line-height:20px;color:#222;left:112px;transform-origin:0 50%;transform:scaleX(0.8265);">E04PEA010</span>
<svg style="left:233px;top:555px" width="18" height="22" viewBox="0 0 18 22"><g fill="#7c90b8"><rect x="-0.3" y="0" width="8.3" height="2.9"/><rect x="9.9" y="0" width="8.3" height="2.9"/><rect x="-0.3" y="5" width="18.5" height="3"/><rect x="-0.3" y="10" width="8.3" height="3"/><rect x="9.9" y="10" width="8.3" height="3"/><rect x="-0.3" y="15.2" width="18.5" height="3"/></g></svg>
<span class="t" style="top:555px;font-size:15px;line-height:20px;color:#222;left:280px;transform-origin:0 50%;transform:scaleX(0.8190);">Hormigón HA-25/B/32/lla usado para pilotes y vigas, fabricado, transportado, suministrado, colocado y curado</span>
<span class="t" style="top:555px;font-size:15px;line-height:20px;color:#ff3cff;right:982.5px;transform-origin:100% 50%;transform:scaleX(0.8265);">1,21</span>
<span class="t" style="top:555px;font-size:15px;line-height:20px;color:#222;left:953px;transform-origin:0 50%;transform:scaleX(0.8265);">m3</span>
<span class="t" style="top:555px;font-size:15px;line-height:20px;color:#ff3cff;right:818.5px;transform-origin:100% 50%;transform:scaleX(0.8165);">200,25</span>
<span class="t" style="top:555px;font-size:15px;line-height:20px;color:#787878;right:746.5px;transform-origin:100% 50%;transform:scaleX(0.8165);">242,30</span>
<span class="t" style="top:555px;font-size:15px;line-height:20px;color:#7474ea;right:662.5px;transform-origin:100% 50%;transform:scaleX(0.8165);">0,07</span>
<div style="left:1114px;top:581px;width:71.5px;height:31px;background:#ffffe3;"></div>
<div style="left:1186px;top:581px;width:82.5px;height:31px;background:#ffffc6;"></div>
<div style="left:81.5px;top:581px;width:27px;height:31px;background:#ffffe1;"></div>
<div style="left:108.5px;top:581px;width:120.5px;height:31px;background:#ffebdb;"></div>
<div style="left:6px;top:581px;width:26px;height:31px;background:#f0f0f0;"></div>
<span class="t" style="top:587px;font-size:15px;line-height:20px;color:#222;left:18.7px;transform:translateX(-50%) scaleX(0.8265);">10</span>
<span class="t" style="top:587px;font-size:15px;line-height:20px;color:#9c9c8c;left:84.7px;transform-origin:0 50%;transform:scaleX(0.8265);">2.5</span>
<span class="t" style="top:587px;font-size:15px;line-height:20px;color:#222;left:112px;transform-origin:0 50%;transform:scaleX(0.8265);">E04PPI170</span>
<svg style="left:233px;top:587px" width="18" height="22" viewBox="0 0 18 22"><g fill="#7c90b8"><rect x="-0.3" y="0" width="8.3" height="2.9"/><rect x="9.9" y="0" width="8.3" height="2.9"/><rect x="-0.3" y="5" width="18.5" height="3"/><rect x="-0.3" y="10" width="8.3" height="3"/><rect x="9.9" y="10" width="8.3" height="3"/><rect x="-0.3" y="15.2" width="18.5" height="3"/></g></svg>
<span class="t" style="top:587px;font-size:15px;line-height:20px;color:#222;left:280px;transform-origin:0 50%;transform:scaleX(0.8234);">Pilote CPI-5 fabricado in situ, con entubación recuperable y camisa de acero perdida, ejecutado en terrenos ...</span>
<span class="t" style="top:587px;font-size:15px;line-height:20px;color:#ff3cff;right:982.5px;transform-origin:100% 50%;transform:scaleX(0.8265);">67,65</span>
<span class="t" style="top:587px;font-size:15px;line-height:20px;color:#222;left:953px;transform-origin:0 50%;transform:scaleX(0.8265);">m</span>
<span class="t" style="top:587px;font-size:15px;line-height:20px;color:#ff3cff;right:818.5px;transform-origin:100% 50%;transform:scaleX(0.8165);">98,25</span>
<span class="t" style="top:587px;font-size:15px;line-height:20px;color:#787878;right:746.5px;transform-origin:100% 50%;transform:scaleX(0.8165);">6.646,61</span>
<span class="t" style="top:587px;font-size:15px;line-height:20px;color:#7474ea;right:662.5px;transform-origin:100% 50%;transform:scaleX(0.8165);">1,82</span>
<div style="left:81.5px;top:613px;width:27px;height:5px;background:#ffffe1;"></div>
<div style="left:108.5px;top:613px;width:120.5px;height:5px;background:#ffebdb;"></div>
<div style="left:1114px;top:613px;width:71.5px;height:5px;background:#ffffe3;"></div>
<div style="left:1186px;top:613px;width:82.5px;height:5px;background:#ffffc6;"></div>
<div style="left:6px;top:613px;width:26px;height:5px;background:#f0f0f0;"></div>
<div style="left:49px;top:324px;width:1221px;height:1px;background:#d2d2d2;"></div>
<div style="left:49px;top:324px;width:838.5px;height:1px;background:#e4e8f0;"></div>
<div style="left:6px;top:324px;width:26px;height:1px;background:#c6c6c6;"></div>
<div style="left:64.5px;top:356px;width:1205.5px;height:1px;background:#d2d2d2;"></div>
<div style="left:64.5px;top:356px;width:823px;height:1px;background:#e4e8f0;"></div>
<div style="left:6px;top:356px;width:26px;height:1px;background:#c6c6c6;"></div>
<div style="left:81px;top:388px;width:1189px;height:1px;background:#d2d2d2;"></div>
<div style="left:6px;top:388px;width:26px;height:1px;background:#c6c6c6;"></div>
<div style="left:81px;top:420px;width:1189px;height:1px;background:#d2d2d2;"></div>
<div style="left:6px;top:420px;width:26px;height:1px;background:#c6c6c6;"></div>
<div style="left:64.5px;top:452px;width:1205.5px;height:1px;background:#d2d2d2;"></div>
<div style="left:64.5px;top:452px;width:823px;height:1px;background:#e4e8f0;"></div>
<div style="left:6px;top:452px;width:26px;height:1px;background:#c6c6c6;"></div>
<div style="left:81px;top:484px;width:1189px;height:1px;background:#d2d2d2;"></div>
<div style="left:6px;top:484px;width:26px;height:1px;background:#c6c6c6;"></div>
<div style="left:81px;top:516px;width:1189px;height:1px;background:#d2d2d2;"></div>
<div style="left:6px;top:516px;width:26px;height:1px;background:#c6c6c6;"></div>
<div style="left:81px;top:548px;width:1189px;height:1px;background:#d2d2d2;"></div>
<div style="left:6px;top:548px;width:26px;height:1px;background:#c6c6c6;"></div>
<div style="left:81px;top:580px;width:1189px;height:1px;background:#d2d2d2;"></div>
<div style="left:6px;top:580px;width:26px;height:1px;background:#c6c6c6;"></div>
<div style="left:81px;top:612px;width:1189px;height:1px;background:#d2d2d2;"></div>
<div style="left:6px;top:612px;width:26px;height:1px;background:#c6c6c6;"></div>
<div style="left:48.5px;top:293px;width:1px;height:32px;background:#9a9a9a;"></div>
<div style="left:48.5px;top:324px;width:16px;height:1px;background:#a8a8a8;"></div>
<div style="left:64.5px;top:325px;width:1px;height:32px;background:#8c8c8c;"></div>
<div style="left:64.5px;top:356px;width:16.5px;height:1px;background:#a8a8a8;"></div>
<div style="left:64.5px;top:421px;width:1px;height:32px;background:#8c8c8c;"></div>
<div style="left:64.5px;top:452px;width:16.5px;height:1px;background:#a8a8a8;"></div>
<div style="left:57px;top:344px;width:1px;height:274px;background:#d2d2d2;"></div>
<div style="left:73.5px;top:357px;width:1px;height:63px;background:#dadada;"></div>
<div style="left:73.5px;top:453px;width:1px;height:165px;background:#dadada;"></div>
<div style="left:80.5px;top:357px;width:1px;height:63px;background:#a4a4a4;"></div>
<div style="left:80.5px;top:453px;width:1px;height:165px;background:#a4a4a4;"></div>
<svg style="left:37.3px;top:304.2px" width="6" height="6" viewBox="0 0 6 6"><path d="M5.8 0.2V5.8H0.2Z" fill="#2c2c2c"/></svg>
<svg style="left:53.3px;top:336.4px" width="6" height="6" viewBox="0 0 6 6"><path d="M5.8 0.2V5.8H0.2Z" fill="#2c2c2c"/></svg>
<svg style="left:53.3px;top:432.4px" width="6" height="6" viewBox="0 0 6 6"><path d="M5.8 0.2V5.8H0.2Z" fill="#2c2c2c"/></svg>
<svg style="left:70px;top:366.5px" width="6" height="9" viewBox="0 0 6 9"><path d="M0.6 0.8L5.2 4.5L0.6 8.2Z" fill="#fff" stroke="#333" stroke-width="1"/></svg>
<div style="left:76px;top:371px;width:4px;height:1px;background:#c8c8c8;"></div>
<svg style="left:70px;top:398.5px" width="6" height="9" viewBox="0 0 6 9"><path d="M0.6 0.8L5.2 4.5L0.6 8.2Z" fill="#fff" stroke="#333" stroke-width="1"/></svg>
<div style="left:76px;top:403px;width:4px;height:1px;background:#c8c8c8;"></div>
<svg style="left:70px;top:462.5px" width="6" height="9" viewBox="0 0 6 9"><path d="M0.6 0.8L5.2 4.5L0.6 8.2Z" fill="#fff" stroke="#333" stroke-width="1"/></svg>
<div style="left:76px;top:467px;width:4px;height:1px;background:#c8c8c8;"></div>
<svg style="left:70px;top:494.5px" width="6" height="9" viewBox="0 0 6 9"><path d="M0.6 0.8L5.2 4.5L0.6 8.2Z" fill="#fff" stroke="#333" stroke-width="1"/></svg>
<div style="left:76px;top:499px;width:4px;height:1px;background:#c8c8c8;"></div>
<svg style="left:70px;top:526.5px" width="6" height="9" viewBox="0 0 6 9"><path d="M0.6 0.8L5.2 4.5L0.6 8.2Z" fill="#fff" stroke="#333" stroke-width="1"/></svg>
<div style="left:76px;top:531px;width:4px;height:1px;background:#c8c8c8;"></div>
<svg style="left:70px;top:558.5px" width="6" height="9" viewBox="0 0 6 9"><path d="M0.6 0.8L5.2 4.5L0.6 8.2Z" fill="#fff" stroke="#333" stroke-width="1"/></svg>
<div style="left:76px;top:563px;width:4px;height:1px;background:#c8c8c8;"></div>
<svg style="left:70px;top:590.5px" width="6" height="9" viewBox="0 0 6 9"><path d="M0.6 0.8L5.2 4.5L0.6 8.2Z" fill="#fff" stroke="#333" stroke-width="1"/></svg>
<div style="left:76px;top:595px;width:4px;height:1px;background:#c8c8c8;"></div>
<div style="left:107.5px;top:547.5px;width:123px;height:34px;background:#fff;border:2px solid #8f9ec4;box-sizing:border-box;"></div>
<span class="t" style="top:555px;font-size:15px;line-height:20px;color:#222;left:112px;transform-origin:0 50%;transform:scaleX(0.8265);">E04PEA010</span>
<span class="t" style="top:232px;font-size:11px;line-height:14px;color:#111;left:1306px;transform-origin:0 50%;transform:scaleX(1.0269);">Texto</span>
<svg style="left:1862px;top:240px" width="9" height="5" viewBox="0 0 9 5"><path d="M0 0H9L4.5 5Z" fill="#555"/></svg>
<svg style="left:1882px;top:235px" width="7" height="10" viewBox="0 0 7 10"><path d="M1.5 0.5H5.5M2 0.5V5M5 0.5V5M0 5.5H7M3.5 5.5V10" stroke="#444" stroke-width="1" fill="none"/><rect x="4" y="1" width="1" height="4" fill="#444"/></svg>
<svg style="left:1900.5px;top:236px" width="8" height="8" viewBox="0 0 8 8"><path d="M0.3 0.3L7.7 7.7M7.7 0.3L0.3 7.7" stroke="#555" stroke-width="1" fill="none"/></svg>
<div style="left:1302px;top:251px;width:613px;height:33px;background:#fafafa;"></div>
<span class="t" style="top:260px;font-size:11px;line-height:14px;color:#a9a9a9;left:1309.3px;transform-origin:0 50%;transform:scaleX(0.9941);">Traducir</span>
<span class="t" style="top:260px;font-size:11px;line-height:14px;color:#a9a9a9;left:1362.4px;transform-origin:0 50%;transform:scaleX(1.0299);">Estructurar</span>
<span class="t" style="top:260px;font-size:11px;line-height:14px;color:#a9a9a9;left:1430.4px;transform-origin:0 50%;transform:scaleX(1.0008);">Especificaciones</span>
<span class="t" style="top:260px;font-size:11px;line-height:14px;color:#a9a9a9;left:1525.4px;transform-origin:0 50%;transform:scaleX(0.9586);">Crear APU</span>
<div style="left:1587px;top:253px;width:1px;height:29px;background:#cfcfcf;"></div>
<div style="left:1661px;top:253px;width:1px;height:29px;background:#cfcfcf;"></div>
<div style="left:1702px;top:253px;width:1px;height:29px;background:#cfcfcf;"></div>
<div style="left:1776px;top:253px;width:1px;height:29px;background:#cfcfcf;"></div>
<div style="left:1883px;top:253px;width:1px;height:29px;background:#cfcfcf;"></div>
<div style="left:1302px;top:284px;width:613px;height:333px;background:#fff;border-top:2px solid #6f6f6f;border-left:2px solid #6f6f6f;border-bottom:1px solid #e2e2e2;border-right:1px solid #e2e2e2;box-sizing:border-box;"></div>
<span class="t" style="top:287px;font-size:15.6px;line-height:20px;color:#000;left:1313.5px;transform-origin:0 50%;transform:scaleX(1.0014);">Hormigón Armado Estructural HA-25/B/32/lla, convencional, para encepado de pilotes</span>
<span class="t" style="top:305px;font-size:15.6px;line-height:20px;color:#000;left:1313.5px;transform-origin:0 50%;transform:scaleX(0.9979);">y vigas de arriostrado, fabricado en central, transportado, suministrado, puesto en</span>
<span class="t" style="top:323px;font-size:15.6px;line-height:20px;color:#000;left:1313.5px;transform-origin:0 50%;transform:scaleX(0.9987);">obra (vertido discontinuo manual con canaleta desde camión hormigonera, colocado y</span>
<span class="t" style="top:341px;font-size:15.6px;line-height:20px;color:#000;left:1313.5px;transform-origin:0 50%;transform:scaleX(1.0018);">compactado por vibrado) y curado.</span>
<span class="t" style="top:377px;font-size:15.6px;line-height:20px;color:#000;left:1313.5px;transform-origin:0 50%;transform:scaleX(0.9170);">Incluye:</span>
<span class="t" style="top:395px;font-size:15.6px;line-height:20px;color:#000;left:1361.5px;transform-origin:0 50%;transform:scaleX(1.0035);">- Armadura pasiva, de acero B500S, mediante ferralla armada (cuantía 60</span>
<span class="t" style="top:413px;font-size:15.6px;line-height:20px;color:#000;left:1313.5px;transform-origin:0 50%;transform:scaleX(0.9910);">kg/m3)</span>
<span class="t" style="top:431px;font-size:15.6px;line-height:20px;color:#000;left:1361.5px;transform-origin:0 50%;transform:scaleX(1.0012);">- Encofrado de madera</span>
<span class="t" style="top:449px;font-size:15.6px;line-height:20px;color:#000;left:1361.5px;transform-origin:0 50%;transform:scaleX(1.0055);">- Desencofrado</span>
<span class="t" style="top:467px;font-size:15.6px;line-height:20px;color:#000;left:1361.5px;transform-origin:0 50%;transform:scaleX(0.9990);">- Mermas de hormigón (6%)</span>
<span class="t" style="top:503px;font-size:15.6px;line-height:20px;color:#000;left:1313.5px;transform-origin:0 50%;transform:scaleX(0.9938);">Normativa de referencia:</span>
<span class="t" style="top:521px;font-size:15.6px;line-height:20px;color:#000;left:1361.5px;transform-origin:0 50%;transform:scaleX(1.0123);">EHE-08</span>
<span class="t" style="top:539px;font-size:15.6px;line-height:20px;color:#000;left:1361.5px;transform-origin:0 50%;transform:scaleX(1.0252);">CTE DB SE-C</span>
<span class="t" style="top:557px;font-size:15.6px;line-height:20px;color:#000;left:1361.5px;transform-origin:0 50%;transform:scaleX(1.0244);">NCSE-02</span>
<svg style="left:1608px;top:303px" width="15" height="3" viewBox="0 0 15 3"><path d="M0 2L1.5 0.5L3 2L4.5 0.5L6 2L7.5 0.5L9 2L10.5 0.5L12 2L13.5 0.5L15 2" stroke="#e03030" stroke-width="0.8" fill="none"/></svg>
<span class="t" style="top:634px;font-size:11px;line-height:14px;color:#111;left:9.5px;transform-origin:0 50%;transform:scaleX(1.0424);">Mediciones</span>
<svg style="left:1360px;top:642px" width="9" height="5" viewBox="0 0 9 5"><path d="M0 0H9L4.5 5Z" fill="#555"/></svg>
<svg style="left:1380px;top:637px" width="7" height="10" viewBox="0 0 7 10"><path d="M1.5 0.5H5.5M2 0.5V5M5 0.5V5M0 5.5H7M3.5 5.5V10" stroke="#444" stroke-width="1" fill="none"/><rect x="4" y="1" width="1" height="4" fill="#444"/></svg>
<svg style="left:1398.5px;top:638px" width="8" height="8" viewBox="0 0 8 8"><path d="M0.3 0.3L7.7 7.7M7.7 0.3L0.3 7.7" stroke="#555" stroke-width="1" fill="none"/></svg>
<div style="left:5px;top:653px;width:1408px;height:33px;background:#fafafa;"></div>
<div style="left:78.5px;top:659.5px;width:233px;height:19px;background:#f0f0f0;border:1px solid #cfcfcf;border-radius:4px;box-sizing:border-box;"></div>
<span class="t" style="top:662px;font-size:11px;line-height:14px;color:#777;left:82.5px;transform-origin:0 50%;transform:scaleX(1.0261);">[*] Datos generales</span>
<svg style="left:300px;top:667px" width="7" height="5" viewBox="0 0 7 5"><path d="M0.3 0.5L3.5 4L6.7 0.5" stroke="#999" stroke-width="1" fill="none"/></svg>
<div style="left:5px;top:686px;width:1392px;height:346px;background:#fff;"></div>
<div style="left:5px;top:686px;width:1392px;height:64px;background:#f0f0f0;"></div>
<div style="left:40px;top:718px;width:1222.5px;height:1px;background:#b0b0b0;"></div>
<div style="left:5px;top:749px;width:1392px;height:1px;background:#9c9c9c;"></div>
<div style="left:40px;top:750px;width:1357px;height:1px;background:#e6e6e6;"></div>
<div style="left:77px;top:687px;width:1px;height:62px;background:#b0b0b0;"></div>
<div style="left:175px;top:687px;width:1px;height:62px;background:#b0b0b0;"></div>
<div style="left:385px;top:687px;width:1px;height:62px;background:#b0b0b0;"></div>
<div style="left:461px;top:687px;width:1px;height:62px;background:#b0b0b0;"></div>
<div style="left:510px;top:687px;width:1px;height:62px;background:#b0b0b0;"></div>
<div style="left:576px;top:687px;width:1px;height:62px;background:#b0b0b0;"></div>
<div style="left:642px;top:687px;width:1px;height:62px;background:#b0b0b0;"></div>
<div style="left:708px;top:687px;width:1px;height:62px;background:#b0b0b0;"></div>
<div style="left:769px;top:687px;width:1px;height:62px;background:#b0b0b0;"></div>
<div style="left:835px;top:687px;width:1px;height:62px;background:#b0b0b0;"></div>
<div style="left:902px;top:687px;width:1px;height:62px;background:#b0b0b0;"></div>
<div style="left:941px;top:687px;width:1px;height:62px;background:#b0b0b0;"></div>
<div style="left:1018px;top:687px;width:1px;height:62px;background:#b0b0b0;"></div>
<div style="left:1062px;top:687px;width:1px;height:62px;background:#b0b0b0;"></div>
<div style="left:1129px;top:687px;width:1px;height:62px;background:#b0b0b0;"></div>
<div style="left:1197px;top:687px;width:1px;height:62px;background:#b0b0b0;"></div>
<div style="left:1262px;top:687px;width:1px;height:62px;background:#b0b0b0;"></div>
<div style="left:39px;top:686px;width:1px;height:346px;background:#b4b4b4;"></div>
<div style="left:5px;top:686px;width:1px;height:346px;background:#c4c4c4;"></div>
<div style="left:5px;top:686px;width:35px;height:1px;background:#c4c4c4;"></div>
<div style="left:41.5px;top:719px;width:35.5px;height:30px;background:#cdcdcd;"></div>
<svg style="left:11px;top:723px" width="23" height="23" viewBox="0 0 23 23"><path d="M23 0V23H0Z" fill="#d9d9d9"/></svg>
<span class="t" style="top:693px;font-size:15px;line-height:20px;color:#222;left:49px;transform-origin:0 50%;transform:scaleX(0.8265);">Tag</span>
<span class="t" style="top:693px;font-size:15px;line-height:20px;color:#222;left:83px;transform-origin:0 50%;transform:scaleX(0.8265);">Espacio</span>
<span class="t" style="top:693px;font-size:15px;line-height:20px;color:#222;left:181px;transform-origin:0 50%;transform:scaleX(0.8265);">Comentario</span>
<span class="t" style="top:693px;font-size:15px;line-height:20px;color:#222;right:1487.5px;transform-origin:100% 50%;transform:scaleX(0.8265);">- Usr403</span>
<span class="t" style="top:694px;font-size:9.5px;line-height:12px;color:#222;right:1470.2px;transform-origin:100% 50%;transform:scaleX(0.9815);">01*</span>
<span class="t" style="top:693px;font-size:15px;line-height:20px;color:#222;right:1422px;transform-origin:100% 50%;transform:scaleX(0.8265);">N</span>
<span class="t" style="top:693px;font-size:15px;line-height:20px;color:#222;right:1356px;transform-origin:100% 50%;transform:scaleX(0.8265);">Longitud</span>
<span class="t" style="top:693px;font-size:15px;line-height:20px;color:#222;right:1290px;transform-origin:100% 50%;transform:scaleX(0.8265);">Anchura</span>
<span class="t" style="top:693px;font-size:15px;line-height:20px;color:#222;right:1224px;transform-origin:100% 50%;transform:scaleX(0.8265);">Altura</span>
<span class="t" style="top:693px;font-size:15px;line-height:20px;color:#222;right:1097px;transform-origin:100% 50%;transform:scaleX(0.8265);">Cantidad</span>
<span class="t" style="top:693px;font-size:15px;line-height:20px;color:#222;right:1030px;transform-origin:100% 50%;transform:scaleX(0.8265);">CanPres*</span>
<span class="t" style="top:693px;font-size:15px;line-height:20px;color:#222;right:870px;transform-origin:100% 50%;transform:scaleX(0.8265);">Color</span>
<span class="t" style="top:693px;font-size:15px;line-height:20px;color:#222;right:803.5px;transform-origin:100% 50%;transform:scaleX(0.8265);">FasePlan</span>
<span class="t" style="top:693px;font-size:15px;line-height:20px;color:#222;right:735.5px;transform-origin:100% 50%;transform:scaleX(0.8265);">FaseReal</span>
<span class="t" style="top:693px;font-size:15px;line-height:20px;color:#222;right:670px;transform-origin:100% 50%;transform:scaleX(0.8265);">FaseCert</span>
<span class="t" style="top:693px;font-size:15px;line-height:20px;color:#222;left:714px;transform-origin:0 50%;transform:scaleX(0.8265);">Fórmula</span>
<span class="t" style="top:693px;font-size:15px;line-height:20px;color:#222;left:922px;transform:translateX(-50%) scaleX(0.8265);">Pres</span>
<span class="t" style="top:693px;font-size:15px;line-height:20px;color:#222;left:947px;transform-origin:0 50%;transform:scaleX(0.8265);">EstadoPres</span>
<span class="t" style="top:725px;font-size:15px;line-height:20px;color:#222;right:1470.5px;transform-origin:100% 50%;transform:scaleX(0.8265);">1,00</span>
<span class="t" style="top:725px;font-size:15px;line-height:20px;color:#222;right:1030.5px;transform-origin:100% 50%;transform:scaleX(0.8265);">1,21</span>
<span class="t" style="top:725px;font-size:15px;line-height:20px;color:#222;left:947px;transform-origin:0 50%;transform:scaleX(0.8265);">Inicial</span>
<div style="left:1397px;top:686px;width:16px;height:346px;background:#f0f0f0;"></div>
<div style="left:1404px;top:703px;width:2px;height:17px;background:#7c7c7c;"></div>
<div style="left:1413px;top:630px;width:1px;height:402px;background:#c6c6c6;"></div>
<div style="left:78.5px;top:751px;width:97px;height:31px;background:#66ffb3;"></div>
<div style="left:386px;top:751px;width:75.5px;height:31px;background:#ffffe1;"></div>
<div style="left:462px;top:751px;width:48px;height:31px;background:#d3d3d3;"></div>
<div style="left:511px;top:751px;width:65px;height:31px;background:#d3d3d3;"></div>
<div style="left:577px;top:751px;width:65px;height:31px;background:#d3d3d3;"></div>
<div style="left:643px;top:751px;width:65px;height:31px;background:#d3d3d3;"></div>
<div style="left:836px;top:751px;width:66.5px;height:31px;background:#ffffe1;"></div>
<div style="left:40px;top:782px;width:1222px;height:1px;background:#d2d2d2;"></div>
<div style="left:462px;top:782px;width:246px;height:1px;background:#e2e2e2;"></div>
<div style="left:6px;top:751px;width:33px;height:31px;background:#cdcdcd;"></div>
<div style="left:6px;top:782px;width:33px;height:1px;background:#c6c6c6;"></div>
<span class="t" style="top:757px;font-size:15px;line-height:20px;color:#222;left:22.5px;transform:translateX(-50%) scaleX(0.8265);">1</span>
<div style="left:54.5px;top:761.5px;width:11px;height:11px;background:#fff;border:1.2px solid #9c9c9c;border-radius:2.6px;box-sizing:border-box;"></div>
<span class="t" style="top:757px;font-size:15px;line-height:20px;color:#222;left:81px;transform-origin:0 50%;transform:scaleX(0.8265);">Cimientos</span>
<span class="t" style="top:757px;font-size:15px;line-height:20px;color:#222;left:179px;transform-origin:0 50%;transform:scaleX(0.8268);">Cimientos 600 x 600 x 300mm</span>
<span class="t" style="top:757px;font-size:15px;line-height:20px;color:#ff3cff;right:1470.5px;transform-origin:100% 50%;transform:scaleX(0.8265);">1,00</span>
<span class="t" style="top:757px;font-size:15px;line-height:20px;color:#444;right:1422px;transform-origin:100% 50%;transform:scaleX(0.8265);">1</span>
<span class="t" style="top:757px;font-size:15px;line-height:20px;color:#444;right:1355.5px;transform-origin:100% 50%;transform:scaleX(0.8265);">0,60</span>
<span class="t" style="top:757px;font-size:15px;line-height:20px;color:#444;right:1289.5px;transform-origin:100% 50%;transform:scaleX(0.8265);">0,60</span>
<span class="t" style="top:757px;font-size:15px;line-height:20px;color:#444;right:1223.5px;transform-origin:100% 50%;transform:scaleX(0.8265);">6,30</span>
<span class="t" style="top:757px;font-size:15px;line-height:20px;color:#444;right:1097px;transform-origin:100% 50%;transform:scaleX(0.8265);">0,11</span>
<div style="left:917px;top:761.5px;width:11px;height:11px;background:#fff;border:1.2px solid #9c9c9c;border-radius:2.6px;box-sizing:border-box;"></div>
<svg style="left:917px;top:761.5px" width="11" height="11" viewBox="0 0 11 11"><path d="M2.6 5.6L4.6 7.8L8.4 3.2" stroke="#555" stroke-width="1.2" fill="none"/></svg>
<span class="t" style="top:757px;font-size:15px;line-height:20px;color:#222;left:945px;transform-origin:0 50%;transform:scaleX(0.8265);">Inicial</span>
<div style="left:78.5px;top:783px;width:97px;height:31px;background:#66ffb3;"></div>
<div style="left:386px;top:783px;width:75.5px;height:31px;background:#ffffe1;"></div>
<div style="left:462px;top:783px;width:48px;height:31px;background:#d3d3d3;"></div>
<div style="left:511px;top:783px;width:65px;height:31px;background:#d3d3d3;"></div>
<div style="left:577px;top:783px;width:65px;height:31px;background:#d3d3d3;"></div>
<div style="left:643px;top:783px;width:65px;height:31px;background:#d3d3d3;"></div>
<div style="left:836px;top:783px;width:66.5px;height:31px;background:#ffffe1;"></div>
<div style="left:40px;top:814px;width:1222px;height:1px;background:#d2d2d2;"></div>
<div style="left:462px;top:814px;width:246px;height:1px;background:#e2e2e2;"></div>
<div style="left:6px;top:783px;width:33px;height:31px;background:#f0f0f0;"></div>
<div style="left:6px;top:814px;width:33px;height:1px;background:#c6c6c6;"></div>
<span class="t" style="top:789px;font-size:15px;line-height:20px;color:#222;left:22.5px;transform:translateX(-50%) scaleX(0.8265);">2</span>
<div style="left:54.5px;top:793.5px;width:11px;height:11px;background:#fff;border:1.2px solid #9c9c9c;border-radius:2.6px;box-sizing:border-box;"></div>
<span class="t" style="top:789px;font-size:15px;line-height:20px;color:#222;left:81px;transform-origin:0 50%;transform:scaleX(0.8265);">Cimientos</span>
<span class="t" style="top:789px;font-size:15px;line-height:20px;color:#222;left:179px;transform-origin:0 50%;transform:scaleX(0.8268);">Cimientos 600 x 600 x 300mm</span>
<span class="t" style="top:789px;font-size:15px;line-height:20px;color:#ff3cff;right:1470.5px;transform-origin:100% 50%;transform:scaleX(0.8265);">1,00</span>
<span class="t" style="top:789px;font-size:15px;line-height:20px;color:#444;right:1422px;transform-origin:100% 50%;transform:scaleX(0.8265);">1</span>
<span class="t" style="top:789px;font-size:15px;line-height:20px;color:#444;right:1355.5px;transform-origin:100% 50%;transform:scaleX(0.8265);">0,60</span>
<span class="t" style="top:789px;font-size:15px;line-height:20px;color:#444;right:1289.5px;transform-origin:100% 50%;transform:scaleX(0.8265);">0,60</span>
<span class="t" style="top:789px;font-size:15px;line-height:20px;color:#444;right:1223.5px;transform-origin:100% 50%;transform:scaleX(0.8265);">6,30</span>
<span class="t" style="top:789px;font-size:15px;line-height:20px;color:#444;right:1097px;transform-origin:100% 50%;transform:scaleX(0.8265);">0,11</span>
<div style="left:917px;top:793.5px;width:11px;height:11px;background:#fff;border:1.2px solid #9c9c9c;border-radius:2.6px;box-sizing:border-box;"></div>
<svg style="left:917px;top:793.5px" width="11" height="11" viewBox="0 0 11 11"><path d="M2.6 5.6L4.6 7.8L8.4 3.2" stroke="#555" stroke-width="1.2" fill="none"/></svg>
<span class="t" style="top:789px;font-size:15px;line-height:20px;color:#222;left:945px;transform-origin:0 50%;transform:scaleX(0.8265);">Inicial</span>
<div style="left:78.5px;top:815px;width:97px;height:31px;background:#66ffb3;"></div>
<div style="left:386px;top:815px;width:75.5px;height:31px;background:#ffffe1;"></div>
<div style="left:462px;top:815px;width:48px;height:31px;background:#d3d3d3;"></div>
<div style="left:511px;top:815px;width:65px;height:31px;background:#d3d3d3;"></div>
<div style="left:577px;top:815px;width:65px;height:31px;background:#d3d3d3;"></div>
<div style="left:643px;top:815px;width:65px;height:31px;background:#d3d3d3;"></div>
<div style="left:836px;top:815px;width:66.5px;height:31px;background:#ffffe1;"></div>
<div style="left:40px;top:846px;width:1222px;height:1px;background:#d2d2d2;"></div>
<div style="left:462px;top:846px;width:246px;height:1px;background:#e2e2e2;"></div>
<div style="left:6px;top:815px;width:33px;height:31px;background:#f0f0f0;"></div>
<div style="left:6px;top:846px;width:33px;height:1px;background:#c6c6c6;"></div>
<span class="t" style="top:821px;font-size:15px;line-height:20px;color:#222;left:22.5px;transform:translateX(-50%) scaleX(0.8265);">3</span>
<div style="left:54.5px;top:825.5px;width:11px;height:11px;background:#fff;border:1.2px solid #9c9c9c;border-radius:2.6px;box-sizing:border-box;"></div>
<span class="t" style="top:821px;font-size:15px;line-height:20px;color:#222;left:81px;transform-origin:0 50%;transform:scaleX(0.8265);">Cimientos</span>
<span class="t" style="top:821px;font-size:15px;line-height:20px;color:#222;left:179px;transform-origin:0 50%;transform:scaleX(0.8268);">Cimientos 600 x 600 x 300mm</span>
<span class="t" style="top:821px;font-size:15px;line-height:20px;color:#ff3cff;right:1470.5px;transform-origin:100% 50%;transform:scaleX(0.8265);">1,00</span>
<span class="t" style="top:821px;font-size:15px;line-height:20px;color:#444;right:1422px;transform-origin:100% 50%;transform:scaleX(0.8265);">1</span>
<span class="t" style="top:821px;font-size:15px;line-height:20px;color:#444;right:1355.5px;transform-origin:100% 50%;transform:scaleX(0.8265);">0,60</span>
<span class="t" style="top:821px;font-size:15px;line-height:20px;color:#444;right:1289.5px;transform-origin:100% 50%;transform:scaleX(0.8265);">0,60</span>
<span class="t" style="top:821px;font-size:15px;line-height:20px;color:#444;right:1223.5px;transform-origin:100% 50%;transform:scaleX(0.8265);">6,30</span>
<span class="t" style="top:821px;font-size:15px;line-height:20px;color:#444;right:1097px;transform-origin:100% 50%;transform:scaleX(0.8265);">0,11</span>
<div style="left:917px;top:825.5px;width:11px;height:11px;background:#fff;border:1.2px solid #9c9c9c;border-radius:2.6px;box-sizing:border-box;"></div>
<svg style="left:917px;top:825.5px" width="11" height="11" viewBox="0 0 11 11"><path d="M2.6 5.6L4.6 7.8L8.4 3.2" stroke="#555" stroke-width="1.2" fill="none"/></svg>
<span class="t" style="top:821px;font-size:15px;line-height:20px;color:#222;left:945px;transform-origin:0 50%;transform:scaleX(0.8265);">Inicial</span>
<div style="left:78.5px;top:847px;width:97px;height:31px;background:#66ffb3;"></div>
<div style="left:386px;top:847px;width:75.5px;height:31px;background:#ffffe1;"></div>
<div style="left:462px;top:847px;width:48px;height:31px;background:#d3d3d3;"></div>
<div style="left:511px;top:847px;width:65px;height:31px;background:#d3d3d3;"></div>
<div style="left:577px;top:847px;width:65px;height:31px;background:#d3d3d3;"></div>
<div style="left:643px;top:847px;width:65px;height:31px;background:#d3d3d3;"></div>
<div style="left:836px;top:847px;width:66.5px;height:31px;background:#ffffe1;"></div>
<div style="left:40px;top:878px;width:1222px;height:1px;background:#d2d2d2;"></div>
<div style="left:462px;top:878px;width:246px;height:1px;background:#e2e2e2;"></div>
<div style="left:6px;top:847px;width:33px;height:31px;background:#f0f0f0;"></div>
<div style="left:6px;top:878px;width:33px;height:1px;background:#c6c6c6;"></div>
<span class="t" style="top:853px;font-size:15px;line-height:20px;color:#222;left:22.5px;transform:translateX(-50%) scaleX(0.8265);">4</span>
<div style="left:54.5px;top:857.5px;width:11px;height:11px;background:#fff;border:1.2px solid #9c9c9c;border-radius:2.6px;box-sizing:border-box;"></div>
<span class="t" style="top:853px;font-size:15px;line-height:20px;color:#222;left:81px;transform-origin:0 50%;transform:scaleX(0.8265);">Cimientos</span>
<span class="t" style="top:853px;font-size:15px;line-height:20px;color:#222;left:179px;transform-origin:0 50%;transform:scaleX(0.8268);">Cimientos 600 x 600 x 300mm</span>
<span class="t" style="top:853px;font-size:15px;line-height:20px;color:#ff3cff;right:1470.5px;transform-origin:100% 50%;transform:scaleX(0.8265);">1,00</span>
<span class="t" style="top:853px;font-size:15px;line-height:20px;color:#444;right:1422px;transform-origin:100% 50%;transform:scaleX(0.8265);">1</span>
<span class="t" style="top:853px;font-size:15px;line-height:20px;color:#444;right:1355.5px;transform-origin:100% 50%;transform:scaleX(0.8265);">0,60</span>
<span class="t" style="top:853px;font-size:15px;line-height:20px;color:#444;right:1289.5px;transform-origin:100% 50%;transform:scaleX(0.8265);">0,60</span>
<span class="t" style="top:853px;font-size:15px;line-height:20px;color:#444;right:1223.5px;transform-origin:100% 50%;transform:scaleX(0.8265);">6,30</span>
<span class="t" style="top:853px;font-size:15px;line-height:20px;color:#444;right:1097px;transform-origin:100% 50%;transform:scaleX(0.8265);">0,11</span>
<div style="left:917px;top:857.5px;width:11px;height:11px;background:#fff;border:1.2px solid #9c9c9c;border-radius:2.6px;box-sizing:border-box;"></div>
<svg style="left:917px;top:857.5px" width="11" height="11" viewBox="0 0 11 11"><path d="M2.6 5.6L4.6 7.8L8.4 3.2" stroke="#555" stroke-width="1.2" fill="none"/></svg>
<span class="t" style="top:853px;font-size:15px;line-height:20px;color:#222;left:945px;transform-origin:0 50%;transform:scaleX(0.8265);">Inicial</span>
<div style="left:78.5px;top:879px;width:97px;height:31px;background:#66ffb3;"></div>
<div style="left:386px;top:879px;width:75.5px;height:31px;background:#ffffe1;"></div>
<div style="left:462px;top:879px;width:48px;height:31px;background:#d3d3d3;"></div>
<div style="left:511px;top:879px;width:65px;height:31px;background:#d3d3d3;"></div>
<div style="left:577px;top:879px;width:65px;height:31px;background:#d3d3d3;"></div>
<div style="left:643px;top:879px;width:65px;height:31px;background:#d3d3d3;"></div>
<div style="left:836px;top:879px;width:66.5px;height:31px;background:#ffffe1;"></div>
<div style="left:40px;top:910px;width:1222px;height:1px;background:#d2d2d2;"></div>
<div style="left:462px;top:910px;width:246px;height:1px;background:#e2e2e2;"></div>
<div style="left:6px;top:879px;width:33px;height:31px;background:#f0f0f0;"></div>
<div style="left:6px;top:910px;width:33px;height:1px;background:#c6c6c6;"></div>
<span class="t" style="top:885px;font-size:15px;line-height:20px;color:#222;left:22.5px;transform:translateX(-50%) scaleX(0.8265);">5</span>
<div style="left:54.5px;top:889.5px;width:11px;height:11px;background:#fff;border:1.2px solid #9c9c9c;border-radius:2.6px;box-sizing:border-box;"></div>
<span class="t" style="top:885px;font-size:15px;line-height:20px;color:#222;left:81px;transform-origin:0 50%;transform:scaleX(0.8265);">Cimientos</span>
<span class="t" style="top:885px;font-size:15px;line-height:20px;color:#222;left:179px;transform-origin:0 50%;transform:scaleX(0.8268);">Cimientos 600 x 600 x 300mm</span>
<span class="t" style="top:885px;font-size:15px;line-height:20px;color:#ff3cff;right:1470.5px;transform-origin:100% 50%;transform:scaleX(0.8265);">1,00</span>
<span class="t" style="top:885px;font-size:15px;line-height:20px;color:#444;right:1422px;transform-origin:100% 50%;transform:scaleX(0.8265);">1</span>
<span class="t" style="top:885px;font-size:15px;line-height:20px;color:#444;right:1355.5px;transform-origin:100% 50%;transform:scaleX(0.8265);">0,60</span>
<span class="t" style="top:885px;font-size:15px;line-height:20px;color:#444;right:1289.5px;transform-origin:100% 50%;transform:scaleX(0.8265);">0,60</span>
<span class="t" style="top:885px;font-size:15px;line-height:20px;color:#444;right:1223.5px;transform-origin:100% 50%;transform:scaleX(0.8265);">6,30</span>
<span class="t" style="top:885px;font-size:15px;line-height:20px;color:#444;right:1097px;transform-origin:100% 50%;transform:scaleX(0.8265);">0,11</span>
<div style="left:917px;top:889.5px;width:11px;height:11px;background:#fff;border:1.2px solid #9c9c9c;border-radius:2.6px;box-sizing:border-box;"></div>
<svg style="left:917px;top:889.5px" width="11" height="11" viewBox="0 0 11 11"><path d="M2.6 5.6L4.6 7.8L8.4 3.2" stroke="#555" stroke-width="1.2" fill="none"/></svg>
<span class="t" style="top:885px;font-size:15px;line-height:20px;color:#222;left:945px;transform-origin:0 50%;transform:scaleX(0.8265);">Inicial</span>
<div style="left:78.5px;top:911px;width:97px;height:31px;background:#66ffb3;"></div>
<div style="left:386px;top:911px;width:75.5px;height:31px;background:#ffffe1;"></div>
<div style="left:462px;top:911px;width:48px;height:31px;background:#d3d3d3;"></div>
<div style="left:511px;top:911px;width:65px;height:31px;background:#d3d3d3;"></div>
<div style="left:577px;top:911px;width:65px;height:31px;background:#d3d3d3;"></div>
<div style="left:643px;top:911px;width:65px;height:31px;background:#d3d3d3;"></div>
<div style="left:836px;top:911px;width:66.5px;height:31px;background:#ffffe1;"></div>
<div style="left:40px;top:942px;width:1222px;height:1px;background:#d2d2d2;"></div>
<div style="left:462px;top:942px;width:246px;height:1px;background:#e2e2e2;"></div>
<div style="left:6px;top:911px;width:33px;height:31px;background:#f0f0f0;"></div>
<div style="left:6px;top:942px;width:33px;height:1px;background:#c6c6c6;"></div>
<span class="t" style="top:917px;font-size:15px;line-height:20px;color:#222;left:22.5px;transform:translateX(-50%) scaleX(0.8265);">6</span>
<div style="left:54.5px;top:921.5px;width:11px;height:11px;background:#fff;border:1.2px solid #9c9c9c;border-radius:2.6px;box-sizing:border-box;"></div>
<span class="t" style="top:917px;font-size:15px;line-height:20px;color:#222;left:81px;transform-origin:0 50%;transform:scaleX(0.8265);">Cimientos</span>
<span class="t" style="top:917px;font-size:15px;line-height:20px;color:#222;left:179px;transform-origin:0 50%;transform:scaleX(0.8268);">Cimientos 600 x 600 x 300mm</span>
<span class="t" style="top:917px;font-size:15px;line-height:20px;color:#ff3cff;right:1470.5px;transform-origin:100% 50%;transform:scaleX(0.8265);">1,00</span>
<span class="t" style="top:917px;font-size:15px;line-height:20px;color:#444;right:1422px;transform-origin:100% 50%;transform:scaleX(0.8265);">1</span>
<span class="t" style="top:917px;font-size:15px;line-height:20px;color:#444;right:1355.5px;transform-origin:100% 50%;transform:scaleX(0.8265);">0,60</span>
<span class="t" style="top:917px;font-size:15px;line-height:20px;color:#444;right:1289.5px;transform-origin:100% 50%;transform:scaleX(0.8265);">0,60</span>
<span class="t" style="top:917px;font-size:15px;line-height:20px;color:#444;right:1223.5px;transform-origin:100% 50%;transform:scaleX(0.8265);">6,30</span>
<span class="t" style="top:917px;font-size:15px;line-height:20px;color:#444;right:1097px;transform-origin:100% 50%;transform:scaleX(0.8265);">0,11</span>
<div style="left:917px;top:921.5px;width:11px;height:11px;background:#fff;border:1.2px solid #9c9c9c;border-radius:2.6px;box-sizing:border-box;"></div>
<svg style="left:917px;top:921.5px" width="11" height="11" viewBox="0 0 11 11"><path d="M2.6 5.6L4.6 7.8L8.4 3.2" stroke="#555" stroke-width="1.2" fill="none"/></svg>
<span class="t" style="top:917px;font-size:15px;line-height:20px;color:#222;left:945px;transform-origin:0 50%;transform:scaleX(0.8265);">Inicial</span>
<div style="left:78.5px;top:943px;width:97px;height:31px;background:#66ffb3;"></div>
<div style="left:386px;top:943px;width:75.5px;height:31px;background:#ffffe1;"></div>
<div style="left:462px;top:943px;width:48px;height:31px;background:#d3d3d3;"></div>
<div style="left:511px;top:943px;width:65px;height:31px;background:#d3d3d3;"></div>
<div style="left:577px;top:943px;width:65px;height:31px;background:#d3d3d3;"></div>
<div style="left:643px;top:943px;width:65px;height:31px;background:#d3d3d3;"></div>
<div style="left:836px;top:943px;width:66.5px;height:31px;background:#ffffe1;"></div>
<div style="left:40px;top:974px;width:1222px;height:1px;background:#d2d2d2;"></div>
<div style="left:462px;top:974px;width:246px;height:1px;background:#e2e2e2;"></div>
<div style="left:6px;top:943px;width:33px;height:31px;background:#f0f0f0;"></div>
<div style="left:6px;top:974px;width:33px;height:1px;background:#c6c6c6;"></div>
<span class="t" style="top:949px;font-size:15px;line-height:20px;color:#222;left:22.5px;transform:translateX(-50%) scaleX(0.8265);">7</span>
<div style="left:54.5px;top:953.5px;width:11px;height:11px;background:#fff;border:1.2px solid #9c9c9c;border-radius:2.6px;box-sizing:border-box;"></div>
<span class="t" style="top:949px;font-size:15px;line-height:20px;color:#222;left:81px;transform-origin:0 50%;transform:scaleX(0.8265);">Cimientos</span>
<span class="t" style="top:949px;font-size:15px;line-height:20px;color:#222;left:179px;transform-origin:0 50%;transform:scaleX(0.8268);">Cimientos 600 x 600 x 300mm</span>
<span class="t" style="top:949px;font-size:15px;line-height:20px;color:#ff3cff;right:1470.5px;transform-origin:100% 50%;transform:scaleX(0.8265);">1,00</span>
<span class="t" style="top:949px;font-size:15px;line-height:20px;color:#444;right:1422px;transform-origin:100% 50%;transform:scaleX(0.8265);">1</span>
<span class="t" style="top:949px;font-size:15px;line-height:20px;color:#444;right:1355.5px;transform-origin:100% 50%;transform:scaleX(0.8265);">0,60</span>
<span class="t" style="top:949px;font-size:15px;line-height:20px;color:#444;right:1289.5px;transform-origin:100% 50%;transform:scaleX(0.8265);">0,60</span>
<span class="t" style="top:949px;font-size:15px;line-height:20px;color:#444;right:1223.5px;transform-origin:100% 50%;transform:scaleX(0.8265);">6,30</span>
<span class="t" style="top:949px;font-size:15px;line-height:20px;color:#444;right:1097px;transform-origin:100% 50%;transform:scaleX(0.8265);">0,11</span>
<div style="left:917px;top:953.5px;width:11px;height:11px;background:#fff;border:1.2px solid #9c9c9c;border-radius:2.6px;box-sizing:border-box;"></div>
<svg style="left:917px;top:953.5px" width="11" height="11" viewBox="0 0 11 11"><path d="M2.6 5.6L4.6 7.8L8.4 3.2" stroke="#555" stroke-width="1.2" fill="none"/></svg>
<span class="t" style="top:949px;font-size:15px;line-height:20px;color:#222;left:945px;transform-origin:0 50%;transform:scaleX(0.8265);">Inicial</span>
<div style="left:78.5px;top:975px;width:97px;height:31px;background:#66ffb3;"></div>
<div style="left:386px;top:975px;width:75.5px;height:31px;background:#ffffe1;"></div>
<div style="left:462px;top:975px;width:48px;height:31px;background:#d3d3d3;"></div>
<div style="left:511px;top:975px;width:65px;height:31px;background:#d3d3d3;"></div>
<div style="left:577px;top:975px;width:65px;height:31px;background:#d3d3d3;"></div>
<div style="left:643px;top:975px;width:65px;height:31px;background:#d3d3d3;"></div>
<div style="left:836px;top:975px;width:66.5px;height:31px;background:#ffffe1;"></div>
<div style="left:40px;top:1006px;width:1222px;height:1px;background:#d2d2d2;"></div>
<div style="left:462px;top:1006px;width:246px;height:1px;background:#e2e2e2;"></div>
<div style="left:6px;top:975px;width:33px;height:31px;background:#f0f0f0;"></div>
<div style="left:6px;top:1006px;width:33px;height:1px;background:#c6c6c6;"></div>
<span class="t" style="top:981px;font-size:15px;line-height:20px;color:#222;left:22.5px;transform:translateX(-50%) scaleX(0.8265);">8</span>
<div style="left:54.5px;top:985.5px;width:11px;height:11px;background:#fff;border:1.2px solid #9c9c9c;border-radius:2.6px;box-sizing:border-box;"></div>
<span class="t" style="top:981px;font-size:15px;line-height:20px;color:#222;left:81px;transform-origin:0 50%;transform:scaleX(0.8265);">Cimientos</span>
<span class="t" style="top:981px;font-size:15px;line-height:20px;color:#222;left:179px;transform-origin:0 50%;transform:scaleX(0.8268);">Cimientos 600 x 600 x 300mm</span>
<span class="t" style="top:981px;font-size:15px;line-height:20px;color:#ff3cff;right:1470.5px;transform-origin:100% 50%;transform:scaleX(0.8265);">1,00</span>
<span class="t" style="top:981px;font-size:15px;line-height:20px;color:#444;right:1422px;transform-origin:100% 50%;transform:scaleX(0.8265);">1</span>
<span class="t" style="top:981px;font-size:15px;line-height:20px;color:#444;right:1355.5px;transform-origin:100% 50%;transform:scaleX(0.8265);">0,60</span>
<span class="t" style="top:981px;font-size:15px;line-height:20px;color:#444;right:1289.5px;transform-origin:100% 50%;transform:scaleX(0.8265);">0,60</span>
<span class="t" style="top:981px;font-size:15px;line-height:20px;color:#444;right:1223.5px;transform-origin:100% 50%;transform:scaleX(0.8265);">6,30</span>
<span class="t" style="top:981px;font-size:15px;line-height:20px;color:#444;right:1097px;transform-origin:100% 50%;transform:scaleX(0.8265);">0,11</span>
<div style="left:917px;top:985.5px;width:11px;height:11px;background:#fff;border:1.2px solid #9c9c9c;border-radius:2.6px;box-sizing:border-box;"></div>
<svg style="left:917px;top:985.5px" width="11" height="11" viewBox="0 0 11 11"><path d="M2.6 5.6L4.6 7.8L8.4 3.2" stroke="#555" stroke-width="1.2" fill="none"/></svg>
<span class="t" style="top:981px;font-size:15px;line-height:20px;color:#222;left:945px;transform-origin:0 50%;transform:scaleX(0.8265);">Inicial</span>
<div style="left:78.5px;top:1007px;width:97px;height:25px;background:#66ffb3;"></div>
<div style="left:386px;top:1007px;width:75.5px;height:25px;background:#ffffe1;"></div>
<div style="left:462px;top:1007px;width:48px;height:25px;background:#d3d3d3;"></div>
<div style="left:511px;top:1007px;width:65px;height:25px;background:#d3d3d3;"></div>
<div style="left:577px;top:1007px;width:65px;height:25px;background:#d3d3d3;"></div>
<div style="left:643px;top:1007px;width:65px;height:25px;background:#d3d3d3;"></div>
<div style="left:836px;top:1007px;width:66.5px;height:25px;background:#ffffe1;"></div>
<div style="left:6px;top:1007px;width:33px;height:25px;background:#f0f0f0;"></div>
<span class="t" style="top:1013px;font-size:15px;line-height:20px;color:#222;left:22.5px;transform:translateX(-50%) scaleX(0.8265);">9</span>
<div style="left:54.5px;top:1017.5px;width:11px;height:11px;background:#fff;border:1.2px solid #9c9c9c;border-radius:2.6px;box-sizing:border-box;"></div>
<span class="t" style="top:1013px;font-size:15px;line-height:20px;color:#222;left:81px;transform-origin:0 50%;transform:scaleX(0.8265);">Cimientos</span>
<span class="t" style="top:1013px;font-size:15px;line-height:20px;color:#222;left:179px;transform-origin:0 50%;transform:scaleX(0.8268);">Cimientos 600 x 600 x 300mm</span>
<span class="t" style="top:1013px;font-size:15px;line-height:20px;color:#ff3cff;right:1470.5px;transform-origin:100% 50%;transform:scaleX(0.8265);">1,00</span>
<span class="t" style="top:1013px;font-size:15px;line-height:20px;color:#444;right:1422px;transform-origin:100% 50%;transform:scaleX(0.8265);">1</span>
<span class="t" style="top:1013px;font-size:15px;line-height:20px;color:#444;right:1355.5px;transform-origin:100% 50%;transform:scaleX(0.8265);">0,60</span>
<span class="t" style="top:1013px;font-size:15px;line-height:20px;color:#444;right:1289.5px;transform-origin:100% 50%;transform:scaleX(0.8265);">0,60</span>
<span class="t" style="top:1013px;font-size:15px;line-height:20px;color:#444;right:1223.5px;transform-origin:100% 50%;transform:scaleX(0.8265);">6,30</span>
<span class="t" style="top:1013px;font-size:15px;line-height:20px;color:#444;right:1097px;transform-origin:100% 50%;transform:scaleX(0.8265);">0,11</span>
<div style="left:917px;top:1017.5px;width:11px;height:11px;background:#fff;border:1.2px solid #9c9c9c;border-radius:2.6px;box-sizing:border-box;"></div>
<svg style="left:917px;top:1017.5px" width="11" height="11" viewBox="0 0 11 11"><path d="M2.6 5.6L4.6 7.8L8.4 3.2" stroke="#555" stroke-width="1.2" fill="none"/></svg>
<span class="t" style="top:1013px;font-size:15px;line-height:20px;color:#222;left:945px;transform-origin:0 50%;transform:scaleX(0.8265);">Inicial</span>
<span class="t" style="top:634px;font-size:11px;line-height:14px;color:#111;left:1429.5px;transform-origin:0 50%;transform:scaleX(1.0642);">Miniaturas</span>
<svg style="left:1862px;top:642px" width="9" height="5" viewBox="0 0 9 5"><path d="M0 0H9L4.5 5Z" fill="#555"/></svg>
<svg style="left:1882px;top:637px" width="7" height="10" viewBox="0 0 7 10"><path d="M1.5 0.5H5.5M2 0.5V5M5 0.5V5M0 5.5H7M3.5 5.5V10" stroke="#444" stroke-width="1" fill="none"/><rect x="4" y="1" width="1" height="4" fill="#444"/></svg>
<svg style="left:1900.5px;top:638px" width="8" height="8" viewBox="0 0 8 8"><path d="M0.3 0.3L7.7 7.7M7.7 0.3L0.3 7.7" stroke="#555" stroke-width="1" fill="none"/></svg>
<div style="left:1425px;top:653px;width:490px;height:379px;background:#d3d3d3;"></div>
<div style="left:1430px;top:655px;width:200px;height:199px;background:#fff;"></div>
<div style="left:1431px;top:854px;width:199px;height:1px;background:#e81c1c;"></div>
<div style="left:1466px;top:858px;width:127px;height:17px;background:#fff;"></div>
<span class="t" style="top:858px;font-size:12px;line-height:16px;color:#111;left:1471px;transform-origin:0 50%;transform:scaleX(0.9056);">600 x 600 x 300mm.JPG</span>
<svg style="left:1430px;top:655px" width="200" height="199" viewBox="0 0 200 199"><defs><linearGradient id="pg" x1="0" x2="1" y1="0" y2="0"><stop offset="0" stop-color="#8a8a8a"/><stop offset="0.12" stop-color="#d8d8d8"/><stop offset="0.3" stop-color="#fdfdfd"/><stop offset="0.55" stop-color="#f0f0f0"/><stop offset="0.75" stop-color="#9a9a9a"/><stop offset="0.92" stop-color="#3c3c3c"/><stop offset="1" stop-color="#6a6a6a"/></linearGradient></defs><path d="M87 16V188Q87 196 96 197H101Q110 196 110 188V16Z" fill="url(#pg)"/><path d="M83 9Q83 7.5 85 6.5L96 1Q98.7 -0.2 101.5 1L112.5 6.5Q114.8 7.5 114.8 9V17Q114.8 18.5 113 19.5L100.5 25.5Q98.7 26.3 97 25.5L84.8 19.5Q83 18.5 83 17Z" fill="#7a7a7a" stroke="#4a4a4a" stroke-width="0.8"/><path d="M85.5 9Q85.5 8 87 7.3L96.5 2.5Q98.7 1.5 101 2.5L110.8 7.3Q112.3 8 112.3 9Q112.3 10 110.8 10.8L101 15.8Q98.7 16.8 96.5 15.8L87 10.8Q85.5 10 85.5 9Z" fill="#b4b4b4"/><path d="M98.7 17.5V25.5" stroke="#2e2e2e" stroke-width="1.2"/></svg>
<svg style="left:0;top:0" width="1928" height="1040" viewBox="0 0 1928 1040"><path d="M13 11H26L29 14V27H13Z" fill="#7088b5"/><rect x="18" y="11" width="6" height="5" fill="#fff" /><rect x="20.5" y="11.5" width="2.5" height="3.5" fill="#333" /><rect x="16" y="19.5" width="10" height="1.6" fill="#e8ecf4" /><rect x="16" y="22.5" width="10" height="1.6" fill="#e8ecf4" /><path d="M53.04 17.37L53.04 20.63L50.51 20.82L50.18 21.6L51.83 23.53L49.53 25.83L47.6 24.18L46.82 24.51L46.63 27.04L43.37 27.04L43.18 24.51L42.4 24.18L40.47 25.83L38.17 23.53L39.82 21.6L39.49 20.82L36.96 20.63L36.96 17.37L39.49 17.18L39.82 16.4L38.17 14.47L40.47 12.17L42.4 13.82L43.18 13.49L43.37 10.96L46.63 10.96L46.82 13.49L47.6 13.82L49.53 12.17L51.83 14.47L50.18 16.4L50.51 17.18Z" fill="#000"/><circle cx="45" cy="19" r="2.8" fill="#c1cade"/><text x="63" y="22.5" font-size="10.5" fill="#222" text-anchor="start" font-family="Liberation Sans" font-weight='bold' >A</text><text x="71.5" y="22.5" font-size="6.5" fill="#222" text-anchor="start" font-family="Liberation Sans" font-weight='bold' >A</text><rect x="63" y="23.8" width="7" height="1.3" fill="#7a90bb" /><path d="M0 3.2L5 0V2C9.5 2 11 5 10.2 8.5C9.6 6.2 8 4.9 5 4.9V6.6Z" fill="#2a2a2a" transform="translate(88 15.5) scale(1.0 1.0)"/><rect x="106.5" y="8.5" width="20.5" height="20.5" rx="3.5" fill="#b1bdd7" stroke="#d3d8e3" stroke-width="1"/><rect x="111.5" y="13" width="11" height="1.6" fill="#7a90bb" /><path d="M112 19.5A5 4.5 0 0 1 121 17.5" stroke="#222" stroke-width="2" fill="none"/><path d="M122 22A5 4.5 0 0 1 113 24" stroke="#222" stroke-width="2" fill="none"/><path d="M119.3 15L123.6 17.6L119.6 20.6Z" fill="#222"/><path d="M114.7 26.6L110.4 24L114.4 21Z" fill="#222"/><rect x="115" y="18.6" width="2" height="2" fill="#7a90bb" /><rect x="118" y="18.6" width="2" height="2" fill="#7a90bb" /><path d="M0 3.2L5 0V2C9.5 2 11 5 10.2 8.5C9.6 6.2 8 4.9 5 4.9V6.6Z" fill="#9ba8c1" transform="translate(146 15.5) scale(-0.9545454545454546 0.9545454545454546)"/><rect x="159" y="16" width="2.5" height="6.5" fill="#6f86b3" /><path d="M170 15.7V22.8L163.5 19.25Z" fill="#222"/><path d="M194 15.7V22.8L187.5 19.25Z" fill="#222"/><path d="M208 15.7V22.8L214.5 19.25Z" fill="#222"/><path d="M232 15.7V22.8L238.5 19.25Z" fill="#222"/><rect x="240.5" y="16" width="2.5" height="6.5" fill="#6f86b3" /><path d="M255 19H267L262.5 23V26L259.5 25V23Z" fill="#a5b0c7"/><circle cx="263.5" cy="15" r="3.3" fill="#b4bdd0"/><path d="M262 13.5L265 16.5M265 13.5L262 16.5" stroke="#c9d0de" stroke-width="1"/><text transform="translate(277 21.5) scale(0.95 1)" font-size="11.5" fill="#7c90b8" text-anchor="start" font-family="Liberation Sans"  >F5</text><circle cx="290" cy="22" r="2.6" fill="#fff" stroke="#86d41f" stroke-width="1.6"/><rect x="298.5" y="8.5" width="20.5" height="20.5" rx="3.5" fill="#b1bdd7" stroke="#d3d8e3" stroke-width="1"/><path d="M307.5 12.5V16.5L302.5 14.5Z M310.5 12.5V16.5L316 14.5Z" fill="#7a90bb"/><rect x="302.5" y="18" width="1.7" height="9" fill="#111" /><rect x="306.7" y="23" width="1.7" height="4" fill="#111" /><rect x="310.6" y="21" width="1.7" height="6" fill="#111" /><rect x="314.3" y="18" width="1.7" height="9" fill="#111" /><rect x="328.5" y="13" width="9" height="12" rx="1.2" fill="#fff" stroke="#222" stroke-width="1.4"/><rect x="329" y="13" width="8" height="3" fill="#222" /><rect x="330" y="17.5" width="6" height="1" fill="#888" /><circle cx="336.5" cy="22.3" r="3.8" fill="#7e94c2"/><path d="M335.3 20.3V24.3L338.7 22.3Z" fill="#fff"/><circle cx="357" cy="19" r="6.6" fill="#1470c2"/><text x="357" y="23" font-size="10.5" fill="#fff" text-anchor="middle" font-family="Liberation Sans" font-weight='bold' >?</text><rect x="373.5" y="16" width="5.5" height="1.2" fill="#6d6d6d" /><path d="M373.5 18.6H379L376.25 21.8Z" fill="#6d6d6d"/><circle cx="1606" cy="17.5" r="4.2" fill="none" stroke="#444" stroke-width="1.2"/><path d="M1603 20.5L1598 25.5" stroke="#444" stroke-width="1.4"/><circle cx="1759" cy="18" r="3.7" fill="#fff"/><path d="M1752.5 28C1752.5 23.5 1755 22 1759 22S1765.5 23.5 1765.5 28Z" fill="#fff"/><rect x="1798" y="21" width="9" height="1" fill="#555" /><rect x="1845.5" y="19.5" width="6.5" height="6.5" rx="1" fill="none" stroke="#555" stroke-width="1"/><path d="M1847.5 19.5V18.5Q1847.5 17.5 1848.5 17.5H1853Q1854 17.5 1854 18.5V23Q1854 24 1853 24H1852" fill="none" stroke="#555" stroke-width="1"/><path d="M1892 17L1901 26M1901 17L1892 26" stroke="#555" stroke-width="1" fill="none"/><path d="M1860 49L1863 52L1866 49" stroke="#555" stroke-width="1" fill="none"/><path d="M1910.5 49L1913.5 52L1916.5 49" stroke="#555" stroke-width="1" fill="none"/></svg>
<svg style="left:0;top:0" width="1928" height="1040" viewBox="0 0 1928 1040"><path d="M34.7 97V86.5H38.3V83.3H41.5V80.2H44" fill="none" stroke="#7a90bb" stroke-width="3.4" stroke-linejoin="miter"/><path d="M33 95.4H43.8" stroke="#7a90bb" stroke-width="3.2"/><path d="M43.5 84V87" stroke="#7a90bb" stroke-width="3.2"/><rect x="43" y="78.5" width="6" height="6" fill="#ff8c1a" /><text transform="translate(46.3 100) scale(1.02 1)" font-size="18.3" fill="#111" text-anchor="start" font-family="Liberation Sans" font-weight='bold' >x</text><rect x="46.5" y="102.2" width="10.5" height="2.3" fill="#7a90bb" /><circle cx="104" cy="83.5" r="4.3" fill="#7f95be"/><path d="M104 86V100H111M104 93.5H111" fill="none" stroke="#7f95be" stroke-width="1.8"/><rect x="111" y="91" width="15" height="5" fill="#2e2e2e" /><rect x="112.5" y="92.5" width="2" height="2" fill="#fff" /><rect x="111" y="97.5" width="15" height="5" fill="#2e2e2e" /><rect x="112.5" y="99" width="2" height="2" fill="#fff" /><text transform="translate(154.8 103.6) scale(1.08 1)" font-size="18" fill="#7a90bb" text-anchor="start" font-family="Liberation Sans" font-weight='bold' stroke='#7a90bb' stroke-width='0.35'>€</text><rect x="169.5" y="78" width="11.5" height="4.6" fill="#2e2e2e" /><rect x="171" y="79.3" width="2" height="2" fill="#fff" /><rect x="169.5" y="84.5" width="11.5" height="4.6" fill="#2e2e2e" /><rect x="171" y="85.8" width="2" height="2" fill="#fff" /><rect x="169.5" y="91" width="11.5" height="4.6" fill="#2e2e2e" /><rect x="171" y="92.3" width="2" height="2" fill="#fff" /><rect x="169.5" y="97.5" width="11.5" height="4.6" fill="#2e2e2e" /><rect x="171" y="98.8" width="2" height="2" fill="#fff" /><path d="M229 79H249.5V90H224.5V83Z" fill="#fff" stroke="#2e2e2e" stroke-width="1.5"/><path d="M229 79V83H224.5" fill="none" stroke="#2e2e2e" stroke-width="1.2"/><text x="245" y="88.5" font-size="8.5" fill="#7a90bb" text-anchor="middle" font-family="Liberation Sans" font-weight='bold' >$</text><rect x="235" y="93" width="15" height="4.3" fill="#2e2e2e" /><rect x="236.5" y="94.15" width="2" height="2" fill="#fff" /><rect x="235" y="99.5" width="15" height="4.3" fill="#2e2e2e" /><rect x="236.5" y="100.65" width="2" height="2" fill="#fff" /><path d="M224 97.7V103.6L230.5 100.6Z" fill="#7a90bb"/><rect x="299.5" y="78" width="14.5" height="4.6" fill="#2e2e2e" /><rect x="301" y="79.3" width="2" height="2" fill="#fff" /><rect x="299.5" y="84.5" width="14.5" height="4.6" fill="#2e2e2e" /><rect x="301" y="85.8" width="2" height="2" fill="#fff" /><rect x="299.5" y="91" width="14.5" height="4.6" fill="#2e2e2e" /><rect x="301" y="92.3" width="2" height="2" fill="#fff" /><rect x="299.5" y="97.5" width="14.5" height="4.6" fill="#2e2e2e" /><rect x="301" y="98.8" width="2" height="2" fill="#fff" /><rect x="342" y="78" width="26" height="5" fill="#2e2e2e" /><rect x="343.8" y="79.6" width="1.8" height="1.8" fill="#fff" /><path d="M343.5 104V101.5M343.5 101.5V104H356M360.5 104H366.5V86.3H357" fill="none" stroke="#b4b4b4" stroke-width="3"/><path d="M343.5 98V86.3H357V89M357 93V97.5H353.5M348.5 97.5H343.5V101" fill="none" stroke="#7a90bb" stroke-width="3"/><path d="M356.5 98V104" stroke="#b4b4b4" stroke-width="3"/><circle cx="410" cy="93.8" r="4.1" fill="#7f95be"/><path d="M403.5 107V101.5Q403.5 99 406 99H414Q416.5 99 416.5 101.5V107Z" fill="#7f95be"/><rect x="418" y="80" width="13" height="4.6" fill="#2e2e2e" /><rect x="427.5" y="81.3" width="2" height="2" fill="#fff" /><rect x="418" y="86.5" width="13" height="4.6" fill="#2e2e2e" /><rect x="427.5" y="87.8" width="2" height="2" fill="#fff" /><rect x="418" y="93" width="13" height="4.6" fill="#2e2e2e" /><rect x="427.5" y="94.3" width="2" height="2" fill="#fff" /><rect x="418" y="99.5" width="13" height="4.6" fill="#2e2e2e" /><rect x="427.5" y="100.8" width="2" height="2" fill="#fff" /><rect x="464" y="79" width="1.7" height="1.7" fill="#9a9a9a" /><rect x="467.2" y="79" width="1.7" height="1.7" fill="#9a9a9a" /><rect x="470.4" y="79" width="1.7" height="1.7" fill="#9a9a9a" /><rect x="464" y="82.2" width="1.7" height="1.7" fill="#9a9a9a" /><rect x="467.2" y="82.2" width="1.7" height="1.7" fill="#9a9a9a" /><rect x="470.4" y="82.2" width="1.7" height="1.7" fill="#9a9a9a" /><rect x="464" y="85.4" width="1.7" height="1.7" fill="#9a9a9a" /><rect x="467.2" y="85.4" width="1.7" height="1.7" fill="#9a9a9a" /><rect x="470.4" y="85.4" width="1.7" height="1.7" fill="#9a9a9a" /><text transform="translate(462.7 103.8) scale(1.02 1)" font-size="17.5" fill="#7a90bb" text-anchor="start" font-family="Liberation Sans" font-weight='bold' stroke='#7a90bb' stroke-width='0.35'>€</text><ellipse cx="480.5" cy="99.5" rx="4.7" ry="4" fill="#fff" stroke="#777" stroke-width="1.5"/><ellipse cx="480.5" cy="95" rx="4.7" ry="4" fill="#fff" stroke="#777" stroke-width="1.5"/><ellipse cx="480.5" cy="90" rx="4.7" ry="4" fill="#fff" stroke="#777" stroke-width="1.5"/><ellipse cx="480.5" cy="84.8" rx="4.7" ry="4" fill="#fff" stroke="#777" stroke-width="1.5"/><rect x="1738" y="79" width="1.7" height="1.7" fill="#9a9a9a" /><rect x="1741.2" y="79" width="1.7" height="1.7" fill="#9a9a9a" /><rect x="1744.4" y="79" width="1.7" height="1.7" fill="#9a9a9a" /><rect x="1738" y="82.2" width="1.7" height="1.7" fill="#9a9a9a" /><rect x="1741.2" y="82.2" width="1.7" height="1.7" fill="#9a9a9a" /><rect x="1744.4" y="82.2" width="1.7" height="1.7" fill="#9a9a9a" /><rect x="1738" y="85.4" width="1.7" height="1.7" fill="#9a9a9a" /><rect x="1741.2" y="85.4" width="1.7" height="1.7" fill="#9a9a9a" /><rect x="1744.4" y="85.4" width="1.7" height="1.7" fill="#9a9a9a" /><text transform="translate(1736.7 103.8) scale(1.02 1)" font-size="17.5" fill="#7a90bb" text-anchor="start" font-family="Liberation Sans" font-weight='bold' stroke='#7a90bb' stroke-width='0.35'>€</text><ellipse cx="1754.5" cy="99.5" rx="4.7" ry="4" fill="#fff" stroke="#f7931e" stroke-width="1.5"/><ellipse cx="1754.5" cy="95" rx="4.7" ry="4" fill="#fff" stroke="#f7931e" stroke-width="1.5"/><ellipse cx="1754.5" cy="90" rx="4.7" ry="4" fill="#fff" stroke="#f7931e" stroke-width="1.5"/><ellipse cx="1754.5" cy="84.8" rx="4.7" ry="4" fill="#fff" stroke="#f7931e" stroke-width="1.5"/><rect x="523" y="78" width="26" height="5" fill="#2e2e2e" /><rect x="523" y="88" width="26" height="16" fill="#8a8a8a" /><rect x="524.6" y="89.6" width="3.32" height="3.13" fill="#fff" /><rect x="524.6" y="94.13" width="3.32" height="3.13" fill="#fff" /><rect x="524.6" y="98.67" width="3.32" height="3.13" fill="#fff" /><rect x="529.32" y="89.6" width="3.32" height="3.13" fill="#fff" /><rect x="529.32" y="94.13" width="3.32" height="3.13" fill="#fff" /><rect x="529.32" y="98.67" width="3.32" height="3.13" fill="#fff" /><rect x="534.04" y="89.6" width="3.32" height="3.13" fill="#fff" /><rect x="534.04" y="94.13" width="3.32" height="3.13" fill="#fff" /><rect x="534.04" y="98.67" width="3.32" height="3.13" fill="#fff" /><rect x="538.76" y="89.6" width="3.32" height="3.13" fill="#fff" /><rect x="538.76" y="94.13" width="3.32" height="3.13" fill="#fff" /><rect x="538.76" y="98.67" width="3.32" height="3.13" fill="#fff" /><rect x="543.48" y="89.6" width="3.32" height="3.13" fill="#fff" /><rect x="543.48" y="94.13" width="3.32" height="3.13" fill="#fff" /><rect x="543.48" y="98.67" width="3.32" height="3.13" fill="#fff" /><rect x="526.5" y="91" width="9.5" height="10" fill="#7a90bb" /><rect x="529.7" y="94.3" width="3" height="3.2" fill="#fff" /><rect x="567" y="78" width="26" height="5" fill="#2e2e2e" /><text transform="translate(568 93.8) scale(1.1 1)" font-size="9.3" fill="#7a90bb" text-anchor="start" font-family="Liberation Sans"  stroke='#7a90bb' stroke-width='0.3'>30</text><text transform="translate(568 103.8) scale(1.1 1)" font-size="9.3" fill="#7a90bb" text-anchor="start" font-family="Liberation Sans"  stroke='#7a90bb' stroke-width='0.3'>31</text><rect x="582" y="84.5" width="11" height="4" fill="#7d7d7d" /><rect x="582" y="90" width="11" height="4" fill="#7d7d7d" /><rect x="582" y="95.5" width="11" height="4" fill="#7d7d7d" /><rect x="582" y="101" width="11" height="4" fill="#7d7d7d" /><rect x="614" y="78" width="26" height="5" fill="#2e2e2e" /><rect x="615.8" y="79.6" width="1.8" height="1.8" fill="#fff" /><rect x="614" y="86" width="14.5" height="5" fill="#7a90bb" /><rect x="630" y="86" width="10" height="5" fill="#b4b4b4" /><rect x="614" y="93" width="5" height="4.4" fill="#b4b4b4" /><rect x="620.5" y="93" width="19.5" height="4.4" fill="#7a90bb" /><rect x="614" y="99" width="5" height="4.8" fill="#b4b4b4" /><rect x="620.5" y="99" width="13" height="4.8" fill="#7a90bb" /><rect x="635" y="99" width="5" height="4.8" fill="#b4b4b4" /><rect x="667" y="78" width="26" height="5" fill="#2e2e2e" /><rect x="668.8" y="79.6" width="1.8" height="1.8" fill="#fff" /><rect x="667" y="86" width="11.5" height="5" fill="#7a90bb" /><rect x="680" y="86" width="13" height="5" fill="#b4b4b4" /><rect x="667" y="93" width="18" height="4.4" fill="#7a90bb" /><rect x="686.5" y="93" width="6.5" height="4.4" fill="#b4b4b4" /><rect x="667" y="99" width="6.5" height="4.8" fill="#7a90bb" /><rect x="675" y="99" width="18" height="4.8" fill="#b4b4b4" /><rect x="729" y="79.5" width="9" height="5.5" fill="#7a90bb" /><rect x="738" y="88" width="8.5" height="5.5" fill="#7a90bb" /><rect x="738" y="97" width="17.5" height="5.5" fill="#7a90bb" /><path d="M738.5 82H741V85.5" fill="none" stroke="#444" stroke-width="1.1"/><path d="M739.3 84.3H742.7L741 86.8Z" fill="#444"/><path d="M738 90.8H734V99.5H738" fill="none" stroke="#444" stroke-width="1.1"/><path d="M790.5 93.3C791.6 91.6 793 91 793.5 89C794.5 84 798 81.3 801.3 80.6C801.3 77.5 805.7 77.5 805.7 80.6C809 81.3 812.5 84 813.5 89C814 91 815.4 91.6 816.5 93.3Z" fill="#ffff00" stroke="#8fa0c4" stroke-width="0.8"/><path d="M801.6 81V87M805.4 81V87" stroke="#ecec3a" stroke-width="0.7"/><rect x="840" y="78.5" width="26" height="4.5" fill="#2e2e2e" /><path d="M842 85.5H864" stroke="#777" stroke-width="1" stroke-dasharray="2.4 1.4"/><text transform="translate(841.2 101.5) scale(0.9 1)" font-size="14" fill="#7a90bb" text-anchor="start" font-family="Liberation Sans" font-weight='bold' >31</text><text transform="translate(855 101.5) scale(0.95 1)" font-size="14" fill="#555" text-anchor="start" font-family="Liberation Sans" font-weight='bold' >€</text><circle cx="914" cy="79.5" r="1.6" fill="#222"/><rect x="917.5" y="78" width="9.5" height="3" fill="#222" /><circle cx="914" cy="84.5" r="1.6" fill="#222"/><rect x="917.5" y="83" width="9.5" height="3" fill="#222" /><circle cx="914" cy="89.5" r="1.6" fill="#222"/><rect x="917.5" y="88" width="9.5" height="3" fill="#222" /><circle cx="914" cy="94.3" r="1.6" fill="#222"/><rect x="917.5" y="92.8" width="9.5" height="3" fill="#222" /><path d="M902 103V98L905.5 95.2L909 98V103Z" fill="#fff" stroke="#7a90bb" stroke-width="1.5"/><rect x="906.5" y="94.3" width="2.4" height="2.4" fill="#ff8c1a" /><text transform="translate(955.8 97.2) scale(1.04 1)" font-size="17.5" fill="#7a90bb" text-anchor="start" font-family="Liberation Sans" font-weight='bold' >x</text><rect x="955.5" y="101" width="11" height="2.8" fill="#c8102e" /><path transform="translate(1000.3 78.3) scale(1.01)" d="M8.3 7.5V18.5A2.6 2.6 0 0 1 3.1 18.5V5.6A3.7 3.7 0 0 1 10.5 5.6V19.2A5 5 0 0 1 0.5 19.2V9" fill="none" stroke="#222" stroke-width="1.59" stroke-linecap="round"/><rect x="1039.8" y="81.6" width="22.4" height="19" fill="#fff" stroke="#7a90bb" stroke-width="1.4"/><circle cx="1039.8" cy="81.6" r="1.5" fill="#7a90bb"/><circle cx="1051" cy="81.6" r="1.5" fill="#7a90bb"/><circle cx="1062.2" cy="81.6" r="1.5" fill="#7a90bb"/><circle cx="1039.8" cy="91" r="1.5" fill="#7a90bb"/><circle cx="1062.2" cy="91" r="1.5" fill="#7a90bb"/><circle cx="1039.8" cy="100.6" r="1.5" fill="#7a90bb"/><circle cx="1051" cy="100.6" r="1.5" fill="#7a90bb"/><circle cx="1062.2" cy="100.6" r="1.5" fill="#7a90bb"/><rect x="1043" y="85" width="16" height="7.2" fill="#00a8ec" /><rect x="1043" y="93" width="16" height="4.2" fill="#3bb54a" /><path d="M1045.8 92.2A2.3 2.3 0 0 1 1050.4 92.2Z" fill="#fff"/><path d="M1046.7 92.2A1.4 1.4 0 0 1 1049.5 92.2Z" fill="#ff8c1a"/><path d="M1097 90L1106.5 85.2M1097 92L1106.5 96.8" stroke="#333" stroke-width="2"/><circle cx="1107.5" cy="84.6" r="4.8" fill="#333"/><circle cx="1107.5" cy="97.4" r="4.8" fill="#333"/><circle cx="1094.5" cy="91" r="3.1" fill="#fff" stroke="#7a90bb" stroke-width="2"/><rect x="1142" y="78.5" width="26" height="4.5" fill="#2e2e2e" /><rect x="1143.8" y="80.1" width="1.8" height="1.8" fill="#fff" /><path d="M1143.5 94V86H1152.5V89.5M1143.5 92.8H1146.5M1149.5 92.8H1152.5V91.5" fill="none" stroke="#7a90bb" stroke-width="2.6"/><text transform="translate(1141.6 104.6) scale(1.08 1)" font-size="9.6" fill="#7a90bb" text-anchor="start" font-family="Liberation Sans"  stroke='#7a90bb' stroke-width='0.3'>31</text><rect x="1157" y="84.5" width="11" height="4" fill="#7d7d7d" /><rect x="1157" y="90" width="11" height="4" fill="#7d7d7d" /><rect x="1157" y="95.5" width="11" height="4" fill="#7d7d7d" /><rect x="1157" y="101" width="11" height="4" fill="#7d7d7d" /><rect x="1203.4" y="88.5" width="1.3" height="16.5" fill="#222" /><rect x="1203.5" y="78.5" width="1" height="10" fill="#b0b0b0" /><rect x="1198.4" y="79" width="5.2" height="1" fill="#9a9a9a" /><rect x="1198.4" y="82" width="5.2" height="1" fill="#9a9a9a" /><rect x="1198.4" y="85" width="5.2" height="1" fill="#9a9a9a" /><rect x="1198" y="88" width="10" height="1.4" fill="#222" /><rect x="1198.4" y="92" width="5.2" height="1" fill="#9a9a9a" /><rect x="1198.4" y="95" width="5.2" height="1" fill="#9a9a9a" /><rect x="1198.4" y="98" width="5.2" height="1" fill="#9a9a9a" /><rect x="1198.4" y="101" width="5.2" height="1" fill="#9a9a9a" /><rect x="1198" y="104" width="10" height="1.4" fill="#222" /><text transform="translate(1208.7 102) scale(0.85 1)" font-size="18.8" fill="#7a90bb" text-anchor="start" font-family="Liberation Sans" font-weight='bold' stroke='#7a90bb' stroke-width='0.5'>m</text><rect x="1266.4" y="88.5" width="1.3" height="16.5" fill="#222" /><rect x="1266.5" y="78.5" width="1" height="10" fill="#b0b0b0" /><rect x="1261.4" y="79" width="5.2" height="1" fill="#9a9a9a" /><rect x="1261.4" y="82" width="5.2" height="1" fill="#9a9a9a" /><rect x="1261.4" y="85" width="5.2" height="1" fill="#9a9a9a" /><rect x="1261" y="88" width="10" height="1.4" fill="#222" /><rect x="1261.4" y="92" width="5.2" height="1" fill="#9a9a9a" /><rect x="1261.4" y="95" width="5.2" height="1" fill="#9a9a9a" /><rect x="1261.4" y="98" width="5.2" height="1" fill="#9a9a9a" /><rect x="1261.4" y="101" width="5.2" height="1" fill="#9a9a9a" /><rect x="1261" y="104" width="10" height="1.4" fill="#222" /><text transform="translate(1271.7 102) scale(0.85 1)" font-size="18.8" fill="#7a90bb" text-anchor="start" font-family="Liberation Sans" font-weight='bold' stroke='#7a90bb' stroke-width='0.5'>m</text><circle cx="1280.5" cy="83.5" r="6" fill="#fff" stroke="#111" stroke-width="1.5"/><path d="M1280.5 84.5L1280 80.5L1283.8 81.5Z" fill="#e8101c"/><rect x="1314" y="78.5" width="26" height="4.5" fill="#2e2e2e" /><rect x="1315.8" y="80.1" width="1.8" height="1.8" fill="#fff" /><path d="M1339.2 87.2H1322Q1314.8 87.2 1314.8 94.2Q1314.8 101.2 1322 101.2H1339.2Z" fill="#fff" stroke="#8a8a8a" stroke-width="1.5"/><text transform="translate(1327.8 99) scale(1.0 1)" font-size="13.3" fill="#7a90bb" text-anchor="start" font-family="Liberation Sans" font-weight='bold' >€</text><rect x="1375" y="80" width="14.5" height="9.5" fill="#ff8c1a" /><rect x="1376.7" y="81.6" width="2.6" height="2.4" fill="#fff" /><rect x="1376.7" y="85.6" width="2.6" height="2.4" fill="#fff" /><rect x="1381.1" y="81.6" width="2.6" height="2.4" fill="#fff" /><rect x="1381.1" y="85.6" width="2.6" height="2.4" fill="#fff" /><rect x="1385.5" y="81.6" width="2.6" height="2.4" fill="#fff" /><rect x="1385.5" y="85.6" width="2.6" height="2.4" fill="#fff" /><rect x="1377" y="92" width="5" height="2.2" fill="#7a90bb" /><rect x="1383" y="92" width="5" height="2.2" fill="#7a90bb" /><rect x="1377" y="95.2" width="11" height="2.2" fill="#7a90bb" /><rect x="1377" y="98.4" width="5" height="2.2" fill="#7a90bb" /><rect x="1383" y="98.4" width="5" height="2.2" fill="#7a90bb" /><rect x="1377" y="101.6" width="11" height="2.2" fill="#7a90bb" /><rect x="1424.8" y="79.3" width="17" height="23.5" rx="2.6" fill="#fff" stroke="#2e2e2e" stroke-width="1.6"/><path d="M1430 77H1439.5V88.5L1434.75 85L1430 88.5Z" fill="#8299c3"/><rect x="1472.8" y="79.3" width="15.6" height="20" rx="2.6" fill="#fff" stroke="#2e2e2e" stroke-width="1.5"/><rect x="1477.8" y="82.8" width="15.6" height="20" rx="2.6" fill="#fff" stroke="#2e2e2e" stroke-width="1.5"/><circle cx="1489" cy="97" r="8" fill="#662d91"/><text transform="translate(1489 101.6) scale(0.85 1)" font-size="13" fill="#fff" text-anchor="middle" font-family="Liberation Sans" font-weight='bold' >P</text><rect x="1519.8" y="79.3" width="15.6" height="20" rx="2.6" fill="#fff" stroke="#2e2e2e" stroke-width="1.5"/><rect x="1524.8" y="82.8" width="15.6" height="20" rx="2.6" fill="#fff" stroke="#2e2e2e" stroke-width="1.5"/><circle cx="1536" cy="97" r="8" fill="#8299c3"/><text transform="translate(1536 101.6) scale(0.85 1)" font-size="13" fill="#fff" text-anchor="middle" font-family="Liberation Sans" font-weight='bold' >E</text><rect x="1566.8" y="79.3" width="15.6" height="20" rx="2.6" fill="#fff" stroke="#2e2e2e" stroke-width="1.5"/><rect x="1571.8" y="82.8" width="15.6" height="20" rx="2.6" fill="#fff" stroke="#2e2e2e" stroke-width="1.5"/><circle cx="1583" cy="97" r="8" fill="#f7931e"/><text transform="translate(1583 101.6) scale(0.85 1)" font-size="13" fill="#fff" text-anchor="middle" font-family="Liberation Sans" font-weight='bold' >0</text><rect x="1612.8" y="79.3" width="15.6" height="20" rx="2.6" fill="#fff" stroke="#2e2e2e" stroke-width="1.5"/><rect x="1617.8" y="82.8" width="15.6" height="20" rx="2.6" fill="#fff" stroke="#2e2e2e" stroke-width="1.5"/><circle cx="1629" cy="97" r="8" fill="#39b54a"/><text transform="translate(1629 101.6) scale(0.85 1)" font-size="13" fill="#fff" text-anchor="middle" font-family="Liberation Sans" font-weight='bold' >F</text><rect x="1666.5" y="78.5" width="17.5" height="24.5" rx="1" fill="#f7931e"/><rect x="1669.5" y="81" width="4.5" height="4.2" fill="#fff" /><rect x="1669.5" y="88.5" width="4.5" height="4.2" fill="#fff" /><rect x="1669.5" y="95.7" width="4.5" height="4.2" fill="#fff" /><rect x="1676.5" y="81" width="4.5" height="4.2" fill="#fff" /><rect x="1676.5" y="88.5" width="4.5" height="4.2" fill="#fff" /><rect x="1676.5" y="95.7" width="4.5" height="4.2" fill="#fff" /><rect x="1681" y="93" width="12" height="8" fill="#fff" /><rect x="1681" y="88" width="12.5" height="3" fill="#111" /><text transform="translate(1683 99.3) scale(1.0 1)" font-size="6.6" fill="#7a90bb" text-anchor="start" font-family="Liberation Sans"  >31</text><path d="M1815 79.3H1829Q1832.3 79.3 1832.3 82.6V93Q1832.3 96.3 1829 96.3H1823.5L1816.6 100.8L1817.4 96.3H1815Q1811.7 96.3 1811.7 93V82.6Q1811.7 79.3 1815 79.3Z" fill="#fff" stroke="#222" stroke-width="1.5" stroke-linejoin="round"/><rect x="1815" y="84" width="13" height="2.4" fill="#7a90bb" /><rect x="1815" y="88" width="10" height="2.4" fill="#7a90bb" /><rect x="1815" y="92" width="13" height="2.4" fill="#7a90bb" /></svg>
<svg style="left:0;top:0" width="1928" height="1040" viewBox="0 0 1928 1040"><text transform="translate(13.3 220.6) scale(1.02 1)" font-size="14.2" fill="#7a90bb" text-anchor="start" font-family="Liberation Sans" font-weight='bold' stroke='#7a90bb' stroke-width='0.25'>€</text><rect x="24" y="201.5" width="9" height="3.5" fill="#7a90bb" /><rect x="25.2" y="202.45" width="1.6" height="1.6" fill="#fff" /><rect x="24" y="206.5" width="9" height="3.5" fill="#777" /><rect x="25.2" y="207.45" width="1.6" height="1.6" fill="#fff" /><rect x="24" y="211.5" width="9" height="3.5" fill="#777" /><rect x="25.2" y="212.45" width="1.6" height="1.6" fill="#fff" /><rect x="24" y="216" width="9" height="3.5" fill="#777" /><rect x="25.2" y="216.95" width="1.6" height="1.6" fill="#fff" /><path d="M21 215V221.5L24.8 218.2Z" fill="#7ed321"/><rect x="57" y="207.5" width="14" height="3" fill="#6a6a6a" /><rect x="53" y="212" width="14.5" height="4" fill="#7a90bb" /><rect x="54.2" y="213.2" width="1.6" height="1.6" fill="#fff" /><path d="M75 211.8V216.6L70.5 214.2Z" fill="#7a90bb"/><rect x="90" y="207.5" width="14" height="3" fill="#6a6a6a" /><rect x="93" y="212" width="15" height="4" fill="#7a90bb" /><rect x="94.2" y="213.2" width="1.6" height="1.6" fill="#fff" /><path d="M86 211.8V216.6L90.5 214.2Z" fill="#7a90bb"/><rect x="123" y="207.5" width="14" height="3.3" fill="#7a90bb" /><rect x="124.2" y="208.35" width="1.6" height="1.6" fill="#fff" /><rect x="123" y="212" width="14" height="4" fill="#6a6a6a" /><path d="M127.5 222H132.5L130 217.5Z" fill="#7a90bb"/><path d="M160.5 201H166L163.25 205.5Z" fill="#7a90bb"/><rect x="156" y="207.5" width="14" height="3" fill="#6a6a6a" /><rect x="156" y="212" width="14" height="4" fill="#7a90bb" /><rect x="157.2" y="213.2" width="1.6" height="1.6" fill="#fff" /><text transform="translate(525.2 218) scale(0.84 1)" font-size="18" fill="#7a90bb" text-anchor="middle" font-family="Liberation Sans" font-weight='bold' stroke='#7a90bb' stroke-width='0.9'>T</text><rect x="548.5" y="201.5" width="19.5" height="3.5" fill="#2e2e2e" /><rect x="549.7" y="202.6" width="1.4" height="1.4" fill="#fff" /><path d="M549.7 220.3V218M549.7 220.3H558.5M562.5 220.3H566.8V207.2H560" fill="none" stroke="#b4b4b4" stroke-width="2.4"/><path d="M558.8 216V220.5" stroke="#b4b4b4" stroke-width="2.4"/><path d="M549.7 216V207.2H559.5V209.5M559.5 212.5V215.5H557M553.5 215.5H549.7V218.5" fill="none" stroke="#7a90bb" stroke-width="2.4"/><rect x="581.5" y="205" width="19" height="15" fill="#ffffcc" /><rect x="581.5" y="201.5" width="19" height="3.5" fill="#2e2e2e" /><rect x="583.2" y="206.3" width="1.6" height="1.2" fill="#999" /><rect x="586.7" y="206.3" width="1.6" height="1.2" fill="#999" /><rect x="590.2" y="206.3" width="1.6" height="1.2" fill="#999" /><rect x="593.7" y="206.3" width="1.6" height="1.2" fill="#999" /><rect x="597.2" y="206.3" width="1.6" height="1.2" fill="#999" /><text transform="translate(582.4 218) scale(0.98 1)" font-size="9.3" fill="#c8102e" text-anchor="start" font-family="Liberation Sans" font-weight='bold' >31</text><text transform="translate(592.8 218) scale(1.05 1)" font-size="9.3" fill="#7a90bb" text-anchor="start" font-family="Liberation Sans" font-weight='bold' >€</text><rect x="617.5" y="209" width="1.1" height="13" fill="#222" /><rect x="617.6" y="201" width="0.8" height="8" fill="#c0c0c0" /><rect x="614.4" y="201" width="3.4" height="1" fill="#c4c4c4" /><rect x="614.4" y="203" width="3.4" height="1" fill="#c4c4c4" /><rect x="614.4" y="205" width="3.4" height="1" fill="#c4c4c4" /><rect x="614.4" y="207" width="3.4" height="1" fill="#c4c4c4" /><rect x="614" y="209" width="7.5" height="1" fill="#222" /><rect x="614.4" y="211" width="3.4" height="1" fill="#c4c4c4" /><rect x="614.4" y="213" width="3.4" height="1" fill="#c4c4c4" /><rect x="614.4" y="215" width="3.4" height="1" fill="#c4c4c4" /><rect x="614.4" y="217" width="3.4" height="1" fill="#c4c4c4" /><rect x="614.4" y="219" width="3.4" height="1" fill="#c4c4c4" /><rect x="614" y="221" width="7.5" height="1" fill="#222" /><text transform="translate(622.8 219) scale(0.95 1)" font-size="12.6" fill="#7a90bb" text-anchor="start" font-family="Liberation Sans" font-weight='bold' stroke='#7a90bb' stroke-width='0.5'>m</text><path transform="translate(653 201.8) scale(0.74)" d="M8.3 7.5V18.5A2.6 2.6 0 0 1 3.1 18.5V5.6A3.7 3.7 0 0 1 10.5 5.6V19.2A5 5 0 0 1 0.5 19.2V9" fill="none" stroke="#222" stroke-width="1.56" stroke-linecap="round"/><path d="M689 208.5L685.5 214M691 208.5L694.5 214" stroke="#444" stroke-width="1.6"/><circle cx="685" cy="216" r="3.5" fill="#222"/><circle cx="695" cy="216" r="3.5" fill="#222"/><circle cx="690" cy="206" r="2.5" fill="#fff" stroke="#7a90bb" stroke-width="1.7"/><rect x="713" y="201.5" width="9" height="3.5" fill="#2e2e2e" /><rect x="714.2" y="202.45" width="1.6" height="1.6" fill="#fff" /><rect x="713" y="206.5" width="9" height="3.5" fill="#2e2e2e" /><rect x="714.2" y="207.45" width="1.6" height="1.6" fill="#fff" /><rect x="713" y="211.5" width="9" height="3.5" fill="#2e2e2e" /><rect x="714.2" y="212.45" width="1.6" height="1.6" fill="#fff" /><rect x="713" y="216" width="9" height="3.5" fill="#2e2e2e" /><rect x="714.2" y="216.95" width="1.6" height="1.6" fill="#fff" /><text transform="translate(724.3 216) scale(1.05 1)" font-size="13.5" fill="#7a90bb" text-anchor="start" font-family="Liberation Sans" font-weight='bold' stroke='#7a90bb' stroke-width='0.2'>x</text><rect x="724.5" y="218.5" width="8" height="2" fill="#c8102e" /><rect x="749.5" y="209" width="1.1" height="13" fill="#222" /><rect x="749.6" y="201" width="0.8" height="8" fill="#c0c0c0" /><rect x="746.4" y="201" width="3.4" height="1" fill="#c4c4c4" /><rect x="746.4" y="203" width="3.4" height="1" fill="#c4c4c4" /><rect x="746.4" y="205" width="3.4" height="1" fill="#c4c4c4" /><rect x="746.4" y="207" width="3.4" height="1" fill="#c4c4c4" /><rect x="746" y="209" width="7.5" height="1" fill="#222" /><rect x="746.4" y="211" width="3.4" height="1" fill="#c4c4c4" /><rect x="746.4" y="213" width="3.4" height="1" fill="#c4c4c4" /><rect x="746.4" y="215" width="3.4" height="1" fill="#c4c4c4" /><rect x="746.4" y="217" width="3.4" height="1" fill="#c4c4c4" /><rect x="746.4" y="219" width="3.4" height="1" fill="#c4c4c4" /><rect x="746" y="221" width="7.5" height="1" fill="#222" /><text transform="translate(757.3 216) scale(1.05 1)" font-size="13.5" fill="#7a90bb" text-anchor="start" font-family="Liberation Sans" font-weight='bold' stroke='#7a90bb' stroke-width='0.2'>x</text><rect x="757.5" y="218.5" width="8" height="2" fill="#c8102e" /><rect x="779.5" y="201.5" width="19" height="3.5" fill="#2e2e2e" /><rect x="779.5" y="209" width="19" height="11.5" fill="#8a8a8a" /><rect x="780.7" y="210.1" width="2.5" height="2.4" fill="#fff" /><rect x="780.7" y="213.65" width="2.5" height="2.4" fill="#fff" /><rect x="780.7" y="217.2" width="2.5" height="2.4" fill="#fff" /><rect x="784.3" y="210.1" width="2.5" height="2.4" fill="#fff" /><rect x="784.3" y="213.65" width="2.5" height="2.4" fill="#fff" /><rect x="784.3" y="217.2" width="2.5" height="2.4" fill="#fff" /><rect x="787.9" y="210.1" width="2.5" height="2.4" fill="#fff" /><rect x="787.9" y="213.65" width="2.5" height="2.4" fill="#fff" /><rect x="787.9" y="217.2" width="2.5" height="2.4" fill="#fff" /><rect x="791.5" y="210.1" width="2.5" height="2.4" fill="#fff" /><rect x="791.5" y="213.65" width="2.5" height="2.4" fill="#fff" /><rect x="791.5" y="217.2" width="2.5" height="2.4" fill="#fff" /><rect x="795.1" y="210.1" width="2.5" height="2.4" fill="#fff" /><rect x="795.1" y="213.65" width="2.5" height="2.4" fill="#fff" /><rect x="795.1" y="217.2" width="2.5" height="2.4" fill="#fff" /><rect x="782.5" y="211.5" width="6.5" height="6.5" fill="#7a90bb" /><rect x="784.7" y="213.7" width="2.1" height="2.1" fill="#fff" /><text transform="translate(813.3 220.5) scale(0.98 1)" font-size="12.5" fill="#7a90bb" text-anchor="start" font-family="Liberation Sans" font-weight='bold' stroke='#7a90bb' stroke-width='0.4'>€</text><path d="M824.4 208.5V204.6L827.3 202L830.2 204.6V208.5Z" fill="#fff" stroke="#444" stroke-width="1.3"/><rect x="829" y="201" width="2.3" height="2.3" fill="#ff8c1a" /><circle cx="827.2" cy="213.5" r="2.5" fill="#888"/><path d="M823.5 221V218.5Q823.5 217 825 217H829.5Q831 217 831 218.5V221Z" fill="#888"/><rect x="845" y="201.5" width="19.5" height="3.5" fill="#2e2e2e" /><rect x="846.2" y="202.6" width="1.4" height="1.4" fill="#fff" /><path d="M863.8 208.6H851.5Q845.8 208.6 845.8 213.6Q845.8 218.6 851.5 218.6H863.8Z" fill="#fff" stroke="#8a8a8a" stroke-width="1.3"/><text transform="translate(855.8 217.2) scale(1.0 1)" font-size="9.3" fill="#7a90bb" text-anchor="start" font-family="Liberation Sans" font-weight='bold' stroke='#7a90bb' stroke-width='0.3'>€</text><rect x="891.5" y="202" width="14.5" height="12.5" fill="#fff" stroke="#777" stroke-width="0.8"/><rect x="891.5" y="202" width="14.5" height="2.6" fill="#2e2e2e" /><rect x="889" y="205" width="14.5" height="12.5" fill="#fff" stroke="#777" stroke-width="0.8"/><rect x="889" y="205" width="14.5" height="2.6" fill="#2e2e2e" /><rect x="886.5" y="208" width="14.5" height="12.5" fill="#fff" stroke="#777" stroke-width="0.8"/><rect x="886.5" y="208" width="14.5" height="2.6" fill="#2e2e2e" /><path d="M890.5 212.2L897.5 219.2M897.5 212.2L890.5 219.2" stroke="#d0102a" stroke-width="2.4"/><path d="M1597.5 268.8L1601.5 272.8L1597.5 276.8" fill="none" stroke="#ffd7ae" stroke-width="2.2"/><path d="M1605.8 277V270H1609.0V266.5H1610.3V263H1612.2V266.5H1613.5V270H1616.7V277Z" fill="none" stroke="#d6dce9" stroke-width="2.4"/><path d="M1630.8 277V270H1634.0V266.5H1635.3V263H1637.2V266.5H1638.5V270H1641.7V277Z" fill="none" stroke="#d6dce9" stroke-width="2.4"/><path d="M1645.5 268.8L1649.5 272.8L1645.5 276.8" fill="none" stroke="#ffd7ae" stroke-width="2.2"/><path d="M1673 265H1677.5L1675.25 261Z M1673 269.5H1677.5L1675.25 273.5Z" fill="#7a90bb"/><rect x="1679" y="257.5" width="12" height="1.6" fill="#444" /><rect x="1679" y="275.5" width="12" height="1.6" fill="#444" /><rect x="1684" y="260.6" width="7" height="0.9" fill="#777" /><rect x="1684" y="264.6" width="7" height="0.9" fill="#777" /><rect x="1684" y="268.6" width="7" height="0.9" fill="#777" /><rect x="1684" y="272.6" width="7" height="0.9" fill="#777" /><path d="M0 3.2L5 0V2C9.5 2 11 5 10.2 8.5C9.6 6.2 8 4.9 5 4.9V6.6Z" fill="#b9b9b9" transform="translate(1714 262.5) scale(1.5454545454545454 1.5454545454545454)"/><path d="M0 3.2L5 0V2C9.5 2 11 5 10.2 8.5C9.6 6.2 8 4.9 5 4.9V6.6Z" fill="#b9b9b9" transform="translate(1763.5 262.5) scale(-1.5454545454545454 1.5454545454545454)"/><path d="M1785 262.5V272.5L1790 267.5Z" fill="#ffd7ae"/><text transform="translate(1790.2 270.6) scale(0.96 1)" font-size="9.3" fill="#d9dee9" text-anchor="start" font-family="Liberation Sans"  >TXT</text><text transform="translate(1821.8 272) scale(0.98 1)" font-size="13.5" fill="#7a90bb" text-anchor="start" font-family="Liberation Sans" font-weight='bold' stroke='#7a90bb' stroke-width='0.3'>A</text><text x="1831.6" y="272" font-size="8.5" fill="#222" text-anchor="start" font-family="Liberation Sans"  >a</text><text transform="translate(1852.6 272.8) scale(0.93 1)" font-size="13.3" fill="#8a8a8a" text-anchor="start" font-family="Liberation Sans"  >N</text><text transform="translate(1862.4 272.8) scale(0.97 1)" font-size="13.3" fill="#7a90bb" text-anchor="start" font-family="Liberation Sans" font-weight='bold' stroke='#7a90bb' stroke-width='0.3'>N</text><path d="M1903.7 255.3L1906.7 258L1903.7 260.7M1907.9 255.3L1910.9 258L1907.9 260.7" fill="none" stroke="#666" stroke-width="0.9"/><rect x="16" y="665.5" width="14" height="3.3" fill="#d6dce9" /><rect x="17.2" y="666.35" width="1.6" height="1.6" fill="#fff" /><rect x="16" y="670.3" width="14" height="3.6" fill="#dedede" /><path d="M21 680H25.5L23.25 675.5Z" fill="#d6dce9"/><path d="M53.8 659.2H58.6L56.2 663.8Z" fill="#7a90bb"/><rect x="48.8" y="665.5" width="14.4" height="3.3" fill="#6a6a6a" /><rect x="48.8" y="670.3" width="14.4" height="3.6" fill="#7a90bb" /><rect x="50" y="671.3" width="1.6" height="1.6" fill="#fff" /></svg>
</body></html>
